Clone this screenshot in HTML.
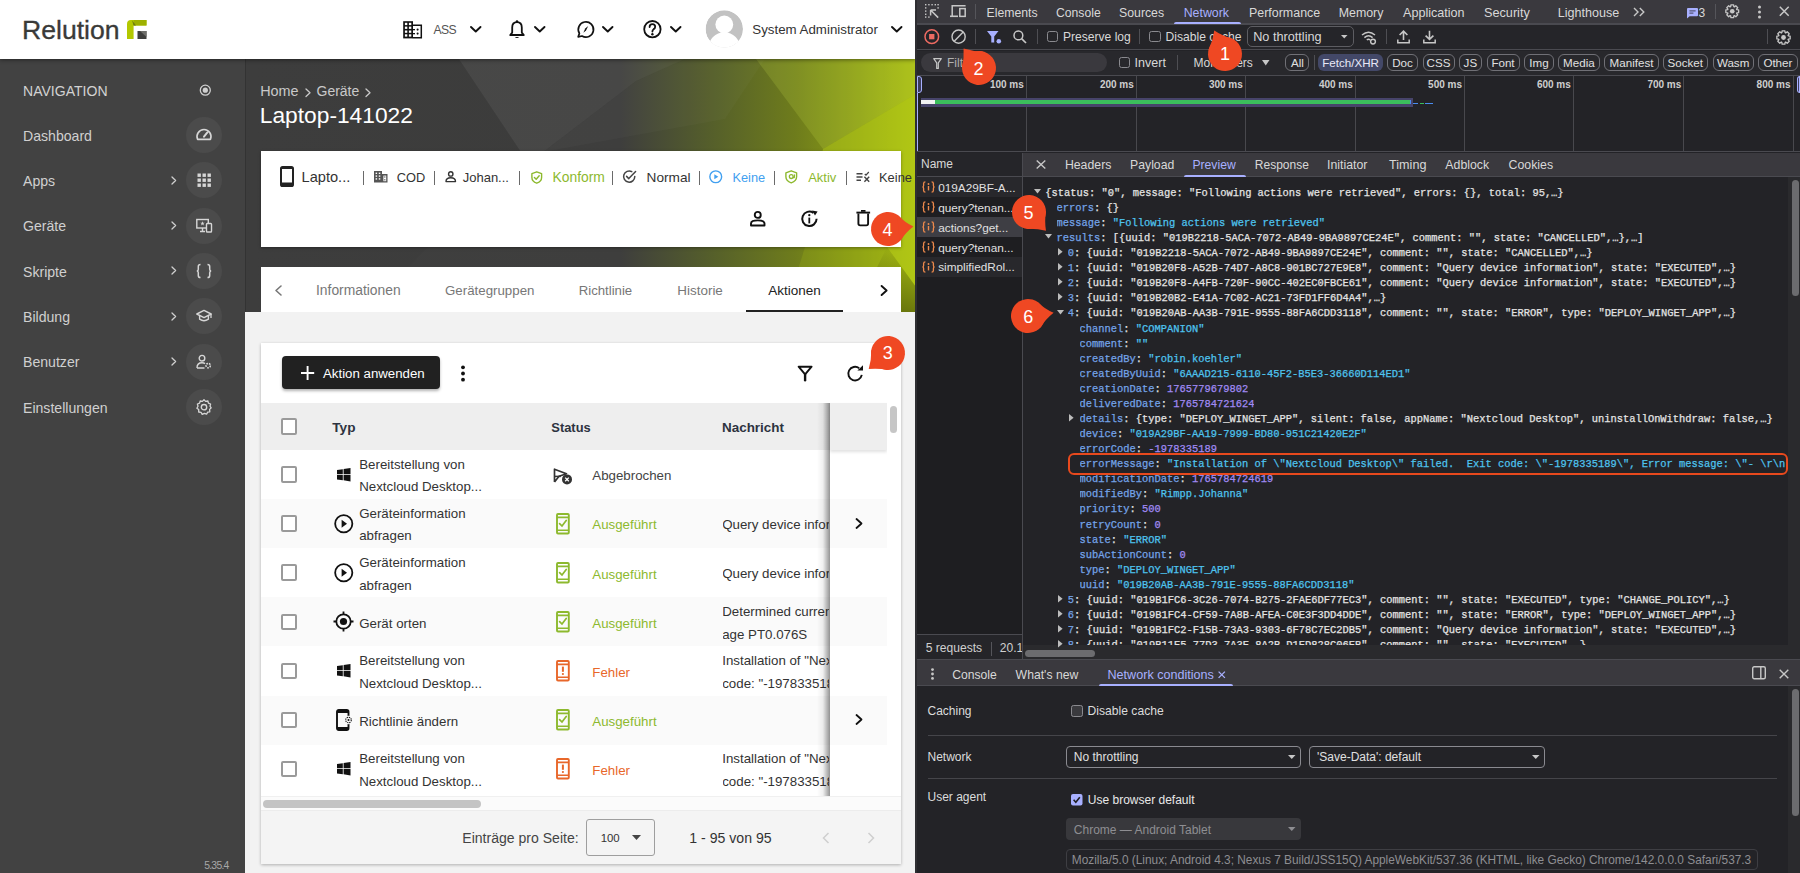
<!DOCTYPE html>
<html><head><meta charset="utf-8"><style>
html,body{margin:0;padding:0;width:1800px;height:873px;overflow:hidden;background:#f2f2f2;}
.t{position:absolute;white-space:pre;line-height:1;}
.r{position:absolute;}
svg.r{overflow:visible;}
</style></head><body>
<div class="r" style="left:245.00px;top:312.00px;width:671.00px;height:561.00px;background:#f2f2f2"></div>
<svg class="r" style="left:245.00px;top:59.00px;" width="671" height="253" viewBox="0 0 671 253">
<defs>
<linearGradient id="hg" x1="0" y1="0" x2="1" y2="0">
<stop offset="0" stop-color="#3f3f3f"/>
<stop offset="0.56" stop-color="#3e3e3d"/>
<stop offset="0.70" stop-color="#56602a"/>
<stop offset="0.82" stop-color="#6e7c1c"/>
<stop offset="0.92" stop-color="#8c9e16"/>
<stop offset="1" stop-color="#a6ba12"/>
</linearGradient>
<linearGradient id="vd" x1="0" y1="0" x2="0" y2="1">
<stop offset="0" stop-color="#000" stop-opacity="0"/>
<stop offset="1" stop-color="#000" stop-opacity="0.35"/>
</linearGradient>
</defs>
<rect x="0" y="0" width="671" height="253" fill="url(#hg)"/>
<polygon points="214,0 440,0 391,22 298,93 276,93" fill="#ffffff" opacity="0.05"/><polygon points="391,22 440,0 520,0 480,60 298,93" fill="#ffffff" opacity="0.025"/>
<polygon points="0,0 214,0 276,93 120,253 0,253" fill="#000000" opacity="0.02"/>
<polygon points="511,0 671,0 671,35 578,90" fill="#d8f050" opacity="0.16"/>
<polygon points="578,90 671,35 671,228 642,188 560,188" fill="#c0d818" opacity="0.42"/><polygon points="560,188 642,188 671,228 671,253 540,253" fill="#a8c010" opacity="0.22"/><polygon points="642,188 671,228 671,253 610,253" fill="url(#vd)"/>

</svg>
<div class="r" style="left:0.00px;top:59.00px;width:245.00px;height:814.00px;background:#424242"></div>
<div class="r" style="left:244.50px;top:59.00px;width:1.00px;height:253.00px;background:#333333"></div>
<div class="r" style="left:0.00px;top:0.00px;width:916.00px;height:59.00px;background:#ffffff;box-shadow:0 1px 4px rgba(0,0,0,0.45);z-index:5"></div>
<div class="t" style="left:22.00px;top:16.80px;font-size:26.6px;color:#3a3a38;font-weight:400;font-family:'Liberation Sans', sans-serif;z-index:6;-webkit-text-stroke:0.35px #3a3a38">Relution</div>
<svg class="r" style="left:127.00px;top:20.00px;z-index:6" width="20" height="19" viewBox="0 0 20 19"><path d="M0,4 Q0,0 4,0 L19.5,0 L19.5,5.5 L6.6,5.5 L6.6,19 L0,19 Z" fill="#b3c800"/>
<path d="M6.6,0 L19.5,0 L19.5,5.5 L6.6,5.5 Z" fill="#9db000"/>
<path d="M5,0.2 L9,5.5 L6.6,5.5 Z" fill="#6d7a10"/>
<rect x="10.5" y="11" width="9" height="8" fill="#3e3e3c"/>
<path d="M13,11 L19.5,11 L19.5,17 Z" fill="#6e6e6a"/></svg>
<svg class="r" style="left:403.00px;top:20.50px;z-index:6" width="20" height="18" viewBox="0 0 20 18"><rect x="0.2" y="0.2" width="9.8" height="17.2" fill="#111"/>
<g fill="#fff"><rect x="1.9" y="1.8" width="2.4" height="2.3"/><rect x="5.9" y="1.8" width="2.4" height="2.3"/><rect x="1.9" y="5.6" width="2.4" height="2.3"/><rect x="5.9" y="5.6" width="2.4" height="2.3"/>
<rect x="1.9" y="9.5" width="2.4" height="2.3"/><rect x="5.9" y="9.5" width="2.4" height="2.3"/><rect x="1.9" y="13.3" width="2.4" height="2.3"/><rect x="5.9" y="13.3" width="2.4" height="2.3"/></g>
<path d="M9.8,4.35 L18.3,4.35 L18.3,16.7 L9.8,16.7" fill="none" stroke="#111" stroke-width="1.5"/>
<g fill="#111"><circle cx="14.6" cy="8.6" r="1.05"/><circle cx="14.6" cy="12.6" r="1.05"/><rect x="9.8" y="8" width="2.2" height="1.3"/><rect x="9.8" y="12" width="2.2" height="1.3"/></g></svg>
<div class="t" style="left:433.50px;top:23.90px;font-size:12.2px;color:#555;font-weight:400;font-family:'Liberation Sans', sans-serif;z-index:6;letter-spacing:-0.6px">ASS</div>
<svg class="r" style="left:469.50px;top:26.30px;z-index:6" width="11.5" height="6.5" viewBox="0 0 11.5 6.5"><path d="M1,1 L5.75,5.5 L10.5,1" fill="none" stroke="#111" stroke-width="1.9" stroke-linecap="round" stroke-linejoin="round"/></svg>
<svg class="r" style="left:509.00px;top:20.00px;z-index:6" width="16" height="19" viewBox="0 0 16 19"><path d="M8,2.2 C4.6,2.2 3.2,4.8 3.2,7.6 L3.2,12.6 L1.2,15 L14.8,15 L12.8,12.6 L12.8,7.6 C12.8,4.8 11.4,2.2 8,2.2 Z" fill="none" stroke="#111" stroke-width="1.8" stroke-linejoin="round"/>
<circle cx="8" cy="1.6" r="1.3" fill="#111"/><path d="M5.8,17 Q8,19 10.2,17 Z" fill="#111"/></svg>
<svg class="r" style="left:534.00px;top:26.30px;z-index:6" width="11.5" height="6.5" viewBox="0 0 11.5 6.5"><path d="M1,1 L5.75,5.5 L10.5,1" fill="none" stroke="#111" stroke-width="1.9" stroke-linecap="round" stroke-linejoin="round"/></svg>
<svg class="r" style="left:575.50px;top:20.50px;z-index:6" width="18" height="17.5" viewBox="0 0 18 17.5"><path d="M2.2,15.8 L3.4,12.4 A7.6,7.6 0 1 1 6,15 Z" fill="none" stroke="#111" stroke-width="1.7" stroke-linejoin="round"/>
<path d="M12.2,5 L10,9.6 L7.4,11.8 L9.2,7.6 Z" fill="#111"/></svg>
<svg class="r" style="left:601.50px;top:26.30px;z-index:6" width="11.5" height="6.5" viewBox="0 0 11.5 6.5"><path d="M1,1 L5.75,5.5 L10.5,1" fill="none" stroke="#111" stroke-width="1.9" stroke-linecap="round" stroke-linejoin="round"/></svg>
<svg class="r" style="left:643.00px;top:20.00px;z-index:6" width="19" height="18.5" viewBox="0 0 19 18.5"><circle cx="9.4" cy="9.2" r="8.2" fill="none" stroke="#111" stroke-width="1.8"/>
<path d="M6.6,7 Q6.6,4.2 9.4,4.2 Q12.2,4.2 12.2,6.8 Q12.2,8.4 10.4,9.4 Q9.4,10 9.4,11.6" fill="none" stroke="#111" stroke-width="1.8" stroke-linecap="round"/>
<circle cx="9.4" cy="14.2" r="1.2" fill="#111"/></svg>
<svg class="r" style="left:669.50px;top:26.30px;z-index:6" width="11.5" height="6.5" viewBox="0 0 11.5 6.5"><path d="M1,1 L5.75,5.5 L10.5,1" fill="none" stroke="#111" stroke-width="1.9" stroke-linecap="round" stroke-linejoin="round"/></svg>
<svg class="r" style="left:705.00px;top:10.00px;z-index:6" width="40" height="40" viewBox="0 0 40 40"><defs><clipPath id="avc"><circle cx="19.3" cy="19" r="18.7"/></clipPath></defs><g clip-path="url(#avc)"><circle cx="19.3" cy="19" r="18.7" fill="#c2c2c2"/>
<circle cx="19.3" cy="14.5" r="8.9" fill="#fff"/>
<circle cx="19.3" cy="38.2" r="16" fill="#fff"/></g></svg>
<div class="t" style="left:752.30px;top:23.30px;font-size:13.3px;color:#333;font-weight:400;font-family:'Liberation Sans', sans-serif;z-index:6">System Administrator</div>
<svg class="r" style="left:891.00px;top:26.30px;z-index:6" width="11.5" height="6.5" viewBox="0 0 11.5 6.5"><path d="M1,1 L5.75,5.5 L10.5,1" fill="none" stroke="#111" stroke-width="1.9" stroke-linecap="round" stroke-linejoin="round"/></svg>
<div class="t" style="left:23.00px;top:83.60px;font-size:14.05px;color:#d2d2d2;font-weight:400;font-family:'Liberation Sans', sans-serif;">NAVIGATION</div>
<svg class="r" style="left:198.50px;top:83.50px;" width="13" height="13" viewBox="0 0 13 13"><circle cx="6.3" cy="6.2" r="5" fill="none" stroke="#cfcfcf" stroke-width="1.3"/><circle cx="6.3" cy="6.2" r="2.6" fill="#cfcfcf"/></svg>
<div class="t" style="left:23.00px;top:128.70px;font-size:14.1px;color:#d0d0d0;font-weight:400;font-family:'Liberation Sans', sans-serif;">Dashboard</div>
<svg class="r" style="left:186.00px;top:116.90px;" width="36" height="36" viewBox="0 0 36 36"><circle cx="18" cy="18" r="18" fill="#4b4b4b"/></svg>
<svg class="r" style="left:196.00px;top:126.90px;" width="16" height="16" viewBox="0 0 16 16"><path d="M1.6,12.4 A7,7 0 1 1 14.4,12.4 Z" fill="none" stroke="#d6d6d6" stroke-width="1.6" stroke-linejoin="round"/><path d="M8,9.6 L11.4,5.4" stroke="#d6d6d6" stroke-width="2" stroke-linecap="round"/></svg>
<div class="t" style="left:23.00px;top:174.02px;font-size:14.1px;color:#d0d0d0;font-weight:400;font-family:'Liberation Sans', sans-serif;">Apps</div>
<svg class="r" style="left:186.00px;top:162.22px;" width="36" height="36" viewBox="0 0 36 36"><circle cx="18" cy="18" r="18" fill="#4b4b4b"/></svg>
<svg class="r" style="left:196.00px;top:172.22px;" width="16" height="16" viewBox="0 0 16 16"><rect x="1.5" y="1.5" width="3.4" height="3.4" fill="#d6d6d6"/><rect x="1.5" y="6.5" width="3.4" height="3.4" fill="#d6d6d6"/><rect x="1.5" y="11.5" width="3.4" height="3.4" fill="#d6d6d6"/><rect x="6.5" y="1.5" width="3.4" height="3.4" fill="#d6d6d6"/><rect x="6.5" y="6.5" width="3.4" height="3.4" fill="#d6d6d6"/><rect x="6.5" y="11.5" width="3.4" height="3.4" fill="#d6d6d6"/><rect x="11.5" y="1.5" width="3.4" height="3.4" fill="#d6d6d6"/><rect x="11.5" y="6.5" width="3.4" height="3.4" fill="#d6d6d6"/><rect x="11.5" y="11.5" width="3.4" height="3.4" fill="#d6d6d6"/></svg>
<svg class="r" style="left:170.50px;top:175.72px;" width="6" height="9" viewBox="0 0 6 9"><path d="M1,1 L4.6,4.5 L1,8" fill="none" stroke="#cfcfcf" stroke-width="1.3" stroke-linecap="round" stroke-linejoin="round"/></svg>
<div class="t" style="left:23.00px;top:219.34px;font-size:14.1px;color:#d0d0d0;font-weight:400;font-family:'Liberation Sans', sans-serif;">Geräte</div>
<svg class="r" style="left:186.00px;top:207.54px;" width="36" height="36" viewBox="0 0 36 36"><circle cx="18" cy="18" r="18" fill="#4b4b4b"/></svg>
<svg class="r" style="left:196.00px;top:217.54px;" width="16" height="16" viewBox="0 0 16 16"><rect x="0.8" y="1.5" width="11.5" height="8.5" fill="none" stroke="#d6d6d6" stroke-width="1.4"/><path d="M4,13.5 L9,13.5 M6.5,10 L6.5,13.5" stroke="#d6d6d6" stroke-width="1.4"/><rect x="10.5" y="5.5" width="5" height="8.5" rx="0.8" fill="#424242" stroke="#d6d6d6" stroke-width="1.4"/><path d="M6.5,3.2 L7.1,4.8 L8.7,4.8 L7.4,5.8 L7.9,7.4 L6.5,6.4 L5.1,7.4 L5.6,5.8 L4.3,4.8 L5.9,4.8 Z" fill="#d6d6d6"/></svg>
<svg class="r" style="left:170.50px;top:221.04px;" width="6" height="9" viewBox="0 0 6 9"><path d="M1,1 L4.6,4.5 L1,8" fill="none" stroke="#cfcfcf" stroke-width="1.3" stroke-linecap="round" stroke-linejoin="round"/></svg>
<div class="t" style="left:23.00px;top:264.66px;font-size:14.1px;color:#d0d0d0;font-weight:400;font-family:'Liberation Sans', sans-serif;">Skripte</div>
<svg class="r" style="left:186.00px;top:252.86px;" width="36" height="36" viewBox="0 0 36 36"><circle cx="18" cy="18" r="18" fill="#4b4b4b"/></svg>
<svg class="r" style="left:196.00px;top:262.86px;" width="16" height="16" viewBox="0 0 16 16"><path d="M4.5,1.5 Q2.3,1.5 2.3,3.6 L2.3,6.2 Q2.3,8 0.8,8 Q2.3,8 2.3,9.8 L2.3,12.4 Q2.3,14.5 4.5,14.5 M11.5,1.5 Q13.7,1.5 13.7,3.6 L13.7,6.2 Q13.7,8 15.2,8 Q13.7,8 13.7,9.8 L13.7,12.4 Q13.7,14.5 11.5,14.5" fill="none" stroke="#d6d6d6" stroke-width="1.5"/></svg>
<svg class="r" style="left:170.50px;top:266.36px;" width="6" height="9" viewBox="0 0 6 9"><path d="M1,1 L4.6,4.5 L1,8" fill="none" stroke="#cfcfcf" stroke-width="1.3" stroke-linecap="round" stroke-linejoin="round"/></svg>
<div class="t" style="left:23.00px;top:309.98px;font-size:14.1px;color:#d0d0d0;font-weight:400;font-family:'Liberation Sans', sans-serif;">Bildung</div>
<svg class="r" style="left:186.00px;top:298.18px;" width="36" height="36" viewBox="0 0 36 36"><circle cx="18" cy="18" r="18" fill="#4b4b4b"/></svg>
<svg class="r" style="left:196.00px;top:308.18px;" width="16" height="16" viewBox="0 0 16 16"><path d="M0.8,6 L8,2.4 L15.2,6 L8,9.6 Z" fill="none" stroke="#d6d6d6" stroke-width="1.4" stroke-linejoin="round"/><path d="M3.6,7.6 L3.6,11.2 Q8,14.2 12.4,11.2 L12.4,7.6" fill="none" stroke="#d6d6d6" stroke-width="1.4"/><path d="M15,6 L15,10" stroke="#d6d6d6" stroke-width="1.3"/></svg>
<svg class="r" style="left:170.50px;top:311.68px;" width="6" height="9" viewBox="0 0 6 9"><path d="M1,1 L4.6,4.5 L1,8" fill="none" stroke="#cfcfcf" stroke-width="1.3" stroke-linecap="round" stroke-linejoin="round"/></svg>
<div class="t" style="left:23.00px;top:355.30px;font-size:14.1px;color:#d0d0d0;font-weight:400;font-family:'Liberation Sans', sans-serif;">Benutzer</div>
<svg class="r" style="left:186.00px;top:343.50px;" width="36" height="36" viewBox="0 0 36 36"><circle cx="18" cy="18" r="18" fill="#4b4b4b"/></svg>
<svg class="r" style="left:196.00px;top:353.50px;" width="16" height="16" viewBox="0 0 16 16"><circle cx="6" cy="4.2" r="2.8" fill="none" stroke="#d6d6d6" stroke-width="1.4"/><path d="M1,14 Q1,8.8 6,8.8 Q8,8.8 9,9.6 M1,14 L8.5,14" fill="none" stroke="#d6d6d6" stroke-width="1.4"/><circle cx="12.2" cy="11.6" r="2.2" fill="none" stroke="#d6d6d6" stroke-width="1.5" stroke-dasharray="1.6 0.9"/></svg>
<svg class="r" style="left:170.50px;top:357.00px;" width="6" height="9" viewBox="0 0 6 9"><path d="M1,1 L4.6,4.5 L1,8" fill="none" stroke="#cfcfcf" stroke-width="1.3" stroke-linecap="round" stroke-linejoin="round"/></svg>
<div class="t" style="left:23.00px;top:400.62px;font-size:14.1px;color:#d0d0d0;font-weight:400;font-family:'Liberation Sans', sans-serif;">Einstellungen</div>
<svg class="r" style="left:186.00px;top:388.82px;" width="36" height="36" viewBox="0 0 36 36"><circle cx="18" cy="18" r="18" fill="#4b4b4b"/></svg>
<svg class="r" style="left:196.00px;top:398.82px;" width="16" height="16" viewBox="0 0 16 16"><path d="M8,0.8 L9.6,2.4 L11.9,2 L12.4,4.2 L14.6,5 L14,7.2 L15.2,8.8 L13.6,10.4 L13.8,12.8 L11.6,13.2 L10.6,15.2 L8.4,14.4 L6.2,15.4 L5,13.3 L2.7,13 L2.7,10.6 L0.9,9.2 L2,7.2 L1.4,5 L3.6,4.2 L4.2,2 L6.4,2.4 Z" fill="none" stroke="#d6d6d6" stroke-width="1.3" stroke-linejoin="round"/><circle cx="8" cy="8.2" r="2.7" fill="none" stroke="#d6d6d6" stroke-width="1.4"/></svg>
<div class="t" style="left:204.20px;top:860.90px;font-size:10.4px;color:#a8a8a8;font-weight:400;font-family:'Liberation Sans', sans-serif;letter-spacing:-0.75px">5.35.4</div>
<div class="t" style="left:260.20px;top:84.40px;font-size:14.4px;color:#c9c9c9;font-weight:400;font-family:'Liberation Sans', sans-serif;">Home</div>
<svg class="r" style="left:304.50px;top:88.00px;" width="7" height="9.5" viewBox="0 0 7 9.5"><path d="M1,1 L5,4.75 L1,8.5" fill="none" stroke="#c9c9c9" stroke-width="1.3" stroke-linecap="round" stroke-linejoin="round"/></svg>
<div class="t" style="left:316.50px;top:84.40px;font-size:14.0px;color:#c9c9c9;font-weight:400;font-family:'Liberation Sans', sans-serif;">Geräte</div>
<svg class="r" style="left:364.50px;top:88.00px;" width="7" height="9.5" viewBox="0 0 7 9.5"><path d="M1,1 L5,4.75 L1,8.5" fill="none" stroke="#c9c9c9" stroke-width="1.3" stroke-linecap="round" stroke-linejoin="round"/></svg>
<div class="t" style="left:259.80px;top:104.20px;font-size:22.75px;color:#ffffff;font-weight:400;font-family:'Liberation Sans', sans-serif;">Laptop-141022</div>
<div class="r" style="left:260.50px;top:150.50px;width:640.00px;height:96.80px;background:#fff;box-shadow:0 1px 3px rgba(0,0,0,0.35)"></div>
<svg class="r" style="left:280.00px;top:166.00px;" width="14" height="21" viewBox="0 0 14 21"><rect x="1" y="1" width="12" height="19" rx="1.6" fill="none" stroke="#222" stroke-width="2"/><rect x="1" y="16.5" width="12" height="3.5" fill="#222"/><rect x="1" y="1" width="12" height="2" fill="#222"/></svg>
<div class="t" style="left:301.60px;top:170.20px;font-size:14.6px;color:#333;font-weight:400;font-family:'Liberation Sans', sans-serif;">Lapto...</div>
<div class="r" style="left:363.00px;top:170.50px;width:1.20px;height:14.00px;background:#6a6a6a"></div>
<svg class="r" style="left:374.00px;top:170.80px;" width="13.5" height="11.5" viewBox="0 0 13.5 11.5"><rect x="0" y="0" width="8" height="11.5" fill="#555"/><rect x="8" y="3" width="5.5" height="8.5" fill="#555"/>
<g fill="#fff"><rect x="1.6" y="1.6" width="1.5" height="1.4"/><rect x="4.8" y="1.6" width="1.5" height="1.4"/><rect x="1.6" y="4.4" width="1.5" height="1.4"/><rect x="4.8" y="4.4" width="1.5" height="1.4"/><rect x="1.6" y="7.2" width="1.5" height="1.4"/><rect x="4.8" y="7.2" width="1.5" height="1.4"/><rect x="9.4" y="4.6" width="2.8" height="5.6"/></g>
<g fill="#555"><rect x="10.2" y="5.4" width="1.2" height="1.2"/><rect x="10.2" y="8.2" width="1.2" height="1.2"/></g></svg>
<div class="t" style="left:396.80px;top:172.20px;font-size:12.8px;color:#333;font-weight:400;font-family:'Liberation Sans', sans-serif;">COD</div>
<div class="r" style="left:434.00px;top:170.50px;width:1.20px;height:14.00px;background:#6a6a6a"></div>
<svg class="r" style="left:445.00px;top:171.00px;" width="11.5" height="11.5" viewBox="0 0 11.5 11.5"><circle cx="5.75" cy="2.9" r="2.2" fill="none" stroke="#333" stroke-width="1.4"/><path d="M1,10.6 Q1,6.8 5.75,6.8 Q10.5,6.8 10.5,10.6 Z" fill="none" stroke="#333" stroke-width="1.4" stroke-linejoin="round"/></svg>
<div class="t" style="left:462.70px;top:171.20px;font-size:13px;color:#333;font-weight:400;font-family:'Liberation Sans', sans-serif;">Johan...</div>
<div class="r" style="left:519.00px;top:170.50px;width:1.20px;height:14.00px;background:#6a6a6a"></div>
<svg class="r" style="left:530.50px;top:170.50px;" width="11.5" height="13" viewBox="0 0 11.5 13"><path d="M5.75,0.8 L10.6,2.6 L10.6,6.4 Q10.6,10.4 5.75,12.2 Q0.9,10.4 0.9,6.4 L0.9,2.6 Z" fill="none" stroke="#8db92e" stroke-width="1.4" stroke-linejoin="round"/><path d="M3.4,6.4 L5.2,8.2 L8.2,4.8" fill="none" stroke="#8db92e" stroke-width="1.4" stroke-linecap="round" stroke-linejoin="round"/></svg>
<div class="t" style="left:552.50px;top:171.20px;font-size:13.85px;color:#8db92e;font-weight:400;font-family:'Liberation Sans', sans-serif;">Konform</div>
<div class="r" style="left:612.00px;top:170.50px;width:1.20px;height:14.00px;background:#6a6a6a"></div>
<svg class="r" style="left:623.00px;top:170.30px;" width="14" height="13" viewBox="0 0 14 13"><path d="M11.8,6.6 A5.6,5.6 0 1 1 8.8,1.6" fill="none" stroke="#444" stroke-width="1.5" stroke-linecap="round"/><path d="M3.6,6.4 L5.8,8.6 L12.6,1.6" fill="none" stroke="#444" stroke-width="1.5" stroke-linecap="round" stroke-linejoin="round"/></svg>
<div class="t" style="left:646.60px;top:171.20px;font-size:13.65px;color:#333;font-weight:400;font-family:'Liberation Sans', sans-serif;">Normal</div>
<div class="r" style="left:699.00px;top:170.50px;width:1.20px;height:14.00px;background:#6a6a6a"></div>
<svg class="r" style="left:709.00px;top:170.00px;" width="13.5" height="13.5" viewBox="0 0 13.5 13.5"><circle cx="6.75" cy="6.75" r="5.9" fill="none" stroke="#42a0f0" stroke-width="1.4"/><path d="M5.3,4.2 L9.3,6.75 L5.3,9.3 Z" fill="#42a0f0"/></svg>
<div class="t" style="left:732.40px;top:172.20px;font-size:12.8px;color:#42a0f0;font-weight:400;font-family:'Liberation Sans', sans-serif;">Keine</div>
<div class="r" style="left:774.00px;top:170.50px;width:1.20px;height:14.00px;background:#6a6a6a"></div>
<svg class="r" style="left:784.50px;top:170.00px;" width="12.5" height="13.5" viewBox="0 0 12.5 13.5"><path d="M6.25,0.8 L11.6,2.8 L11.6,6.8 Q11.6,11 6.25,12.8 Q0.9,11 0.9,6.8 L0.9,2.8 Z" fill="none" stroke="#8db92e" stroke-width="1.4" stroke-linejoin="round"/><circle cx="6.25" cy="6.6" r="1.9" fill="none" stroke="#8db92e" stroke-width="1.3"/><path d="M8.2,6.6 Q8.6,8.6 9.4,7.4 Q10,5.6 9,4.4" fill="none" stroke="#8db92e" stroke-width="1.1"/></svg>
<div class="t" style="left:808.20px;top:171.20px;font-size:13px;color:#8db92e;font-weight:400;font-family:'Liberation Sans', sans-serif;">Aktiv</div>
<div class="r" style="left:846.00px;top:170.50px;width:1.20px;height:14.00px;background:#6a6a6a"></div>
<svg class="r" style="left:855.50px;top:171.00px;" width="14" height="12" viewBox="0 0 14 12"><path d="M0.5,2.8 L6.5,2.8 M0.5,6 L6.5,6 M0.5,9.2 L5,9.2" stroke="#444" stroke-width="1.4"/><path d="M8.4,5.8 L13.2,10.8 M13.2,5.8 L8.4,10.8" stroke="#444" stroke-width="1.4"/><path d="M8.8,3 L10,4.2 L12.8,1" fill="none" stroke="#444" stroke-width="1.2"/></svg>
<div class="t" style="left:879.00px;top:172.20px;font-size:12.9px;color:#333;font-weight:400;font-family:'Liberation Sans', sans-serif;z-index:2">Keine</div>
<svg class="r" style="left:749.50px;top:210.50px;" width="15.5" height="15.5" viewBox="0 0 15.5 15.5"><circle cx="7.75" cy="3.9" r="3" fill="none" stroke="#111" stroke-width="1.9"/><path d="M1,14.5 L1,12.6 Q1,9.4 7.75,9.4 Q14.5,9.4 14.5,12.6 L14.5,14.5 Z" fill="none" stroke="#111" stroke-width="1.9" stroke-linejoin="round"/></svg>
<svg class="r" style="left:801.00px;top:209.50px;" width="18" height="17.5" viewBox="0 0 18 17.5"><path d="M15.6,8.8 A7.2,7.2 0 1 1 12.4,2.8" fill="none" stroke="#111" stroke-width="2"/><path d="M11,0.4 L16.6,1.4 L14,5.6 Z" fill="#111"/><circle cx="8.3" cy="5.2" r="1.15" fill="#111"/><path d="M8.3,7.6 L8.3,13.4" stroke="#111" stroke-width="1.8"/></svg>
<svg class="r" style="left:855.50px;top:210.00px;" width="14.5" height="16.5" viewBox="0 0 14.5 16.5"><path d="M0.4,2.6 L14.1,2.6" stroke="#111" stroke-width="1.9"/><path d="M5,0.9 L9.5,0.9" stroke="#111" stroke-width="1.8"/><path d="M2.4,3.6 L2.4,13.6 Q2.4,15.4 4.2,15.4 L10.3,15.4 Q12.1,15.4 12.1,13.6 L12.1,3.6" fill="none" stroke="#111" stroke-width="1.9"/></svg>
<div class="r" style="left:260.50px;top:267.00px;width:640.00px;height:45.00px;background:#fff"></div>
<svg class="r" style="left:273.50px;top:284.50px;" width="9" height="11" viewBox="0 0 9 11"><path d="M7,1 L2,5.5 L7,10" fill="none" stroke="#777" stroke-width="1.6" stroke-linecap="round" stroke-linejoin="round"/></svg>
<div class="t" style="left:316.00px;top:284.30px;font-size:13.85px;color:#777;font-weight:400;font-family:'Liberation Sans', sans-serif;">Informationen</div>
<div class="t" style="left:445.00px;top:284.30px;font-size:13.3px;color:#777;font-weight:400;font-family:'Liberation Sans', sans-serif;">Gerätegruppen</div>
<div class="t" style="left:578.70px;top:284.30px;font-size:13.2px;color:#777;font-weight:400;font-family:'Liberation Sans', sans-serif;">Richtlinie</div>
<div class="t" style="left:677.30px;top:284.30px;font-size:13.45px;color:#777;font-weight:400;font-family:'Liberation Sans', sans-serif;">Historie</div>
<div class="t" style="left:768.20px;top:284.30px;font-size:13.5px;color:#222;font-weight:400;font-family:'Liberation Sans', sans-serif;">Aktionen</div>
<div class="r" style="left:745.50px;top:310.20px;width:97.00px;height:2.00px;background:#222"></div>
<svg class="r" style="left:879.50px;top:284.50px;" width="9" height="11" viewBox="0 0 9 11"><path d="M1.6,1 L6.6,5.5 L1.6,10" fill="none" stroke="#111" stroke-width="1.9" stroke-linecap="round" stroke-linejoin="round"/></svg>
<div class="r" style="left:260.50px;top:343.00px;width:640.00px;height:520.50px;background:#fff;box-shadow:0 1px 3px rgba(0,0,0,0.28)"></div>
<div class="r" style="left:281.50px;top:356.00px;width:158.30px;height:33.40px;background:#212121;border-radius:4px;box-shadow:0 2px 3px rgba(0,0,0,0.3)"></div>
<svg class="r" style="left:300.80px;top:366.20px;" width="13.2" height="13.9" viewBox="0 0 13.2 13.9"><path d="M6.6,0 L6.6,13.9 M0,6.95 L13.2,6.95" stroke="#fff" stroke-width="1.9"/></svg>
<div class="t" style="left:323.00px;top:367.10px;font-size:13.25px;color:#fff;font-weight:400;font-family:'Liberation Sans', sans-serif;">Aktion anwenden</div>
<svg class="r" style="left:459.50px;top:364.50px;" width="6" height="17" viewBox="0 0 6 17"><circle cx="3" cy="2.3" r="1.9" fill="#111"/><circle cx="3" cy="8.5" r="1.9" fill="#111"/><circle cx="3" cy="14.7" r="1.9" fill="#111"/></svg>
<svg class="r" style="left:796.00px;top:364.50px;" width="18" height="17" viewBox="0 0 18 17"><path d="M2.6,1.7 L15.6,1.7 L9.1,9.4 Z" fill="none" stroke="#111" stroke-width="1.9" stroke-linejoin="round"/><path d="M9.1,9.4 L9.1,15.2" stroke="#111" stroke-width="2.4" stroke-linecap="round"/></svg>
<svg class="r" style="left:846.00px;top:364.00px;" width="18" height="17" viewBox="0 0 18 17"><path d="M15.79,10.9 A6.8,6.8 0 1 1 13.2,4.2" fill="none" stroke="#111" stroke-width="1.9"/><path d="M11.4,6.6 L17,6.6 L17,1.2 Z" fill="#111"/></svg>
<div class="r" style="left:260.50px;top:403.00px;width:626.00px;height:47.00px;background:#eeeeee"></div>
<div class="r" style="left:280.50px;top:418.40px;width:16.60px;height:16.60px;box-sizing:border-box;border:2px solid #9a9a9a;border-radius:2px;background:#fff"></div>
<div class="t" style="left:332.30px;top:421.40px;font-size:13.6px;color:#2d3340;font-weight:700;font-family:'Liberation Sans', sans-serif;">Typ</div>
<div class="t" style="left:551.30px;top:422.40px;font-size:12.9px;color:#2d3340;font-weight:700;font-family:'Liberation Sans', sans-serif;">Status</div>
<div class="t" style="left:722.00px;top:421.40px;font-size:13.45px;color:#2d3340;font-weight:700;font-family:'Liberation Sans', sans-serif;">Nachricht</div>
<div class="r" style="left:260.50px;top:450.00px;width:626.00px;height:49.10px;background:#ffffff"></div>
<div class="r" style="left:280.50px;top:466.20px;width:16.60px;height:16.60px;box-sizing:border-box;border:2px solid #9a9a9a;border-radius:2px;background:#fff"></div>
<svg class="r" style="left:336.60px;top:467.80px;" width="13.5" height="13.5" viewBox="0 0 13.5 13.5"><path d="M0,2 L5.8,1.2 L5.8,6.3 L0,6.3 Z M6.6,1.1 L13.5,0 L13.5,6.3 L6.6,6.3 Z M0,7.1 L5.8,7.1 L5.8,12.2 L0,11.4 Z M6.6,7.1 L13.5,7.1 L13.5,13.4 L6.6,12.3 Z" fill="#111"/></svg>
<div class="t" style="left:359.20px;top:457.60px;font-size:13.3px;color:#333;font-weight:400;font-family:'Liberation Sans', sans-serif;">Bereitstellung von</div>
<div class="t" style="left:359.20px;top:480.30px;font-size:13.3px;color:#333;font-weight:400;font-family:'Liberation Sans', sans-serif;">Nextcloud Desktop...</div>
<svg class="r" style="left:553.00px;top:467.50px;" width="20" height="16.5" viewBox="0 0 20 16.5"><path d="M1.5,14 L1.5,1.2 L13.5,5.8 L6,8.2 L1.5,14" fill="none" stroke="#333" stroke-width="1.7" stroke-linejoin="round"/><path d="M1.5,8.4 L7.8,8.4" stroke="#333" stroke-width="1.5"/><circle cx="14" cy="11.4" r="5" fill="#333"/><path d="M12.2,9.6 L15.8,13.2 M15.8,9.6 L12.2,13.2" stroke="#fff" stroke-width="1.3"/></svg>
<div class="t" style="left:592.30px;top:469.30px;font-size:13.3px;color:#444;font-weight:400;font-family:'Liberation Sans', sans-serif;">Abgebrochen</div>
<div class="r" style="left:723px;top:450.00px;width:106px;height:49.1px;overflow:hidden">
<div class="t" style="left:-0.80px;top:7.60px;font-size:13.3px;color:#333;font-weight:400;font-family:'Liberation Sans', sans-serif;"></div>
<div class="t" style="left:-0.80px;top:30.30px;font-size:13.3px;color:#333;font-weight:400;font-family:'Liberation Sans', sans-serif;"></div>
</div>
<div class="r" style="left:260.50px;top:499.10px;width:626.00px;height:49.10px;background:#fafafa"></div>
<div class="r" style="left:280.50px;top:515.30px;width:16.60px;height:16.60px;box-sizing:border-box;border:2px solid #9a9a9a;border-radius:2px;background:#fff"></div>
<svg class="r" style="left:333.80px;top:513.80px;" width="19.5" height="19.5" viewBox="0 0 19.5 19.5"><circle cx="9.75" cy="9.75" r="8.6" fill="none" stroke="#111" stroke-width="1.8"/><path d="M7.6,5.8 L13,9.75 L7.6,13.7 Z" fill="#111"/></svg>
<div class="t" style="left:359.20px;top:506.70px;font-size:13.3px;color:#333;font-weight:400;font-family:'Liberation Sans', sans-serif;">Geräteinformation</div>
<div class="t" style="left:359.20px;top:529.40px;font-size:13.3px;color:#333;font-weight:400;font-family:'Liberation Sans', sans-serif;">abfragen</div>
<svg class="r" style="left:555.80px;top:512.60px;" width="13.8" height="21.5" viewBox="0 0 13.8 21.5"><rect x="1" y="1" width="11.8" height="19.5" rx="1" fill="none" stroke="#8db92e" stroke-width="1.9"/><path d="M1,4.4 L12.8,4.4 M1,17.2 L12.8,17.2" stroke="#8db92e" stroke-width="1.6"/><path d="M3.6,10.6 L6,13 L10.2,7.4" fill="none" stroke="#8db92e" stroke-width="1.7" stroke-linecap="round"/></svg>
<div class="t" style="left:592.30px;top:518.40px;font-size:13.3px;color:#8db92e;font-weight:400;font-family:'Liberation Sans', sans-serif;">Ausgeführt</div>
<div class="r" style="left:723px;top:499.10px;width:106px;height:49.1px;overflow:hidden">
<div class="t" style="left:-0.80px;top:19.30px;font-size:13.3px;color:#333;font-weight:400;font-family:'Liberation Sans', sans-serif;">Query device infor</div>
</div>
<svg class="r" style="left:854.50px;top:517.60px;" width="8" height="11" viewBox="0 0 8 11"><path d="M1.5,1 L6.5,5.5 L1.5,10" fill="none" stroke="#111" stroke-width="1.8" stroke-linecap="round" stroke-linejoin="round"/></svg>
<div class="r" style="left:260.50px;top:548.20px;width:626.00px;height:49.10px;background:#ffffff"></div>
<div class="r" style="left:280.50px;top:564.40px;width:16.60px;height:16.60px;box-sizing:border-box;border:2px solid #9a9a9a;border-radius:2px;background:#fff"></div>
<svg class="r" style="left:333.80px;top:562.90px;" width="19.5" height="19.5" viewBox="0 0 19.5 19.5"><circle cx="9.75" cy="9.75" r="8.6" fill="none" stroke="#111" stroke-width="1.8"/><path d="M7.6,5.8 L13,9.75 L7.6,13.7 Z" fill="#111"/></svg>
<div class="t" style="left:359.20px;top:555.80px;font-size:13.3px;color:#333;font-weight:400;font-family:'Liberation Sans', sans-serif;">Geräteinformation</div>
<div class="t" style="left:359.20px;top:578.50px;font-size:13.3px;color:#333;font-weight:400;font-family:'Liberation Sans', sans-serif;">abfragen</div>
<svg class="r" style="left:555.80px;top:561.70px;" width="13.8" height="21.5" viewBox="0 0 13.8 21.5"><rect x="1" y="1" width="11.8" height="19.5" rx="1" fill="none" stroke="#8db92e" stroke-width="1.9"/><path d="M1,4.4 L12.8,4.4 M1,17.2 L12.8,17.2" stroke="#8db92e" stroke-width="1.6"/><path d="M3.6,10.6 L6,13 L10.2,7.4" fill="none" stroke="#8db92e" stroke-width="1.7" stroke-linecap="round"/></svg>
<div class="t" style="left:592.30px;top:567.50px;font-size:13.3px;color:#8db92e;font-weight:400;font-family:'Liberation Sans', sans-serif;">Ausgeführt</div>
<div class="r" style="left:723px;top:548.20px;width:106px;height:49.1px;overflow:hidden">
<div class="t" style="left:-0.80px;top:19.30px;font-size:13.3px;color:#333;font-weight:400;font-family:'Liberation Sans', sans-serif;">Query device infor</div>
</div>
<div class="r" style="left:260.50px;top:597.30px;width:626.00px;height:49.10px;background:#fafafa"></div>
<div class="r" style="left:280.50px;top:613.50px;width:16.60px;height:16.60px;box-sizing:border-box;border:2px solid #9a9a9a;border-radius:2px;background:#fff"></div>
<svg class="r" style="left:333.00px;top:611.30px;" width="21" height="21" viewBox="0 0 21 21"><circle cx="10.5" cy="10.5" r="7.2" fill="none" stroke="#111" stroke-width="1.8"/><circle cx="10.5" cy="10.5" r="3.6" fill="#111"/><path d="M10.5,0.5 L10.5,3.3 M10.5,17.7 L10.5,20.5 M0.5,10.5 L3.3,10.5 M17.7,10.5 L20.5,10.5" stroke="#111" stroke-width="1.8"/></svg>
<div class="t" style="left:359.20px;top:616.60px;font-size:13.3px;color:#333;font-weight:400;font-family:'Liberation Sans', sans-serif;">Gerät orten</div>
<svg class="r" style="left:555.80px;top:610.80px;" width="13.8" height="21.5" viewBox="0 0 13.8 21.5"><rect x="1" y="1" width="11.8" height="19.5" rx="1" fill="none" stroke="#8db92e" stroke-width="1.9"/><path d="M1,4.4 L12.8,4.4 M1,17.2 L12.8,17.2" stroke="#8db92e" stroke-width="1.6"/><path d="M3.6,10.6 L6,13 L10.2,7.4" fill="none" stroke="#8db92e" stroke-width="1.7" stroke-linecap="round"/></svg>
<div class="t" style="left:592.30px;top:616.60px;font-size:13.3px;color:#8db92e;font-weight:400;font-family:'Liberation Sans', sans-serif;">Ausgeführt</div>
<div class="r" style="left:723px;top:597.30px;width:106px;height:49.1px;overflow:hidden">
<div class="t" style="left:-0.80px;top:7.60px;font-size:13.3px;color:#333;font-weight:400;font-family:'Liberation Sans', sans-serif;">Determined curren</div>
<div class="t" style="left:-0.80px;top:30.30px;font-size:13.3px;color:#333;font-weight:400;font-family:'Liberation Sans', sans-serif;">age PT0.076S</div>
</div>
<div class="r" style="left:260.50px;top:646.40px;width:626.00px;height:49.10px;background:#ffffff"></div>
<div class="r" style="left:280.50px;top:662.60px;width:16.60px;height:16.60px;box-sizing:border-box;border:2px solid #9a9a9a;border-radius:2px;background:#fff"></div>
<svg class="r" style="left:336.60px;top:664.20px;" width="13.5" height="13.5" viewBox="0 0 13.5 13.5"><path d="M0,2 L5.8,1.2 L5.8,6.3 L0,6.3 Z M6.6,1.1 L13.5,0 L13.5,6.3 L6.6,6.3 Z M0,7.1 L5.8,7.1 L5.8,12.2 L0,11.4 Z M6.6,7.1 L13.5,7.1 L13.5,13.4 L6.6,12.3 Z" fill="#111"/></svg>
<div class="t" style="left:359.20px;top:654.00px;font-size:13.3px;color:#333;font-weight:400;font-family:'Liberation Sans', sans-serif;">Bereitstellung von</div>
<div class="t" style="left:359.20px;top:676.70px;font-size:13.3px;color:#333;font-weight:400;font-family:'Liberation Sans', sans-serif;">Nextcloud Desktop...</div>
<svg class="r" style="left:555.80px;top:659.90px;" width="13.8" height="21.5" viewBox="0 0 13.8 21.5"><rect x="1" y="1" width="11.8" height="19.5" rx="1" fill="none" stroke="#e8672a" stroke-width="1.9"/><path d="M1,4.4 L12.8,4.4 M1,17.2 L12.8,17.2" stroke="#e8672a" stroke-width="1.6"/><path d="M6.9,6.6 L6.9,11.8" stroke="#e8672a" stroke-width="2"/><circle cx="6.9" cy="14" r="1.1" fill="#e8672a"/></svg>
<div class="t" style="left:592.30px;top:665.70px;font-size:13.3px;color:#e8672a;font-weight:400;font-family:'Liberation Sans', sans-serif;">Fehler</div>
<div class="r" style="left:723px;top:646.40px;width:106px;height:49.1px;overflow:hidden">
<div class="t" style="left:-0.80px;top:7.60px;font-size:13.3px;color:#333;font-weight:400;font-family:'Liberation Sans', sans-serif;">Installation of "Nex</div>
<div class="t" style="left:-0.80px;top:30.30px;font-size:13.3px;color:#333;font-weight:400;font-family:'Liberation Sans', sans-serif;">code: "-197833518</div>
</div>
<div class="r" style="left:260.50px;top:695.50px;width:626.00px;height:49.10px;background:#fafafa"></div>
<div class="r" style="left:280.50px;top:711.70px;width:16.60px;height:16.60px;box-sizing:border-box;border:2px solid #9a9a9a;border-radius:2px;background:#fff"></div>
<svg class="r" style="left:336.00px;top:709.00px;" width="18" height="22" viewBox="0 0 18 22"><rect x="1" y="1" width="11.5" height="20" rx="1.8" fill="none" stroke="#111" stroke-width="1.9"/><rect x="1" y="1" width="11.5" height="3" fill="#111"/><rect x="1" y="18" width="11.5" height="3" fill="#111"/><circle cx="12.5" cy="11" r="4.2" fill="#fafafa"/><circle cx="12.5" cy="11" r="2.8" fill="none" stroke="#111" stroke-width="1.1" stroke-dasharray="1.4 0.8"/><circle cx="12.5" cy="11" r="1" fill="#111"/></svg>
<div class="t" style="left:359.20px;top:714.80px;font-size:13.3px;color:#333;font-weight:400;font-family:'Liberation Sans', sans-serif;">Richtlinie ändern</div>
<svg class="r" style="left:555.80px;top:709.00px;" width="13.8" height="21.5" viewBox="0 0 13.8 21.5"><rect x="1" y="1" width="11.8" height="19.5" rx="1" fill="none" stroke="#8db92e" stroke-width="1.9"/><path d="M1,4.4 L12.8,4.4 M1,17.2 L12.8,17.2" stroke="#8db92e" stroke-width="1.6"/><path d="M3.6,10.6 L6,13 L10.2,7.4" fill="none" stroke="#8db92e" stroke-width="1.7" stroke-linecap="round"/></svg>
<div class="t" style="left:592.30px;top:714.80px;font-size:13.3px;color:#8db92e;font-weight:400;font-family:'Liberation Sans', sans-serif;">Ausgeführt</div>
<svg class="r" style="left:854.50px;top:714.00px;" width="8" height="11" viewBox="0 0 8 11"><path d="M1.5,1 L6.5,5.5 L1.5,10" fill="none" stroke="#111" stroke-width="1.8" stroke-linecap="round" stroke-linejoin="round"/></svg>
<div class="r" style="left:260.50px;top:744.60px;width:626.00px;height:46.00px;background:#ffffff"></div>
<div class="r" style="left:280.50px;top:760.80px;width:16.60px;height:16.60px;box-sizing:border-box;border:2px solid #9a9a9a;border-radius:2px;background:#fff"></div>
<svg class="r" style="left:336.60px;top:762.40px;" width="13.5" height="13.5" viewBox="0 0 13.5 13.5"><path d="M0,2 L5.8,1.2 L5.8,6.3 L0,6.3 Z M6.6,1.1 L13.5,0 L13.5,6.3 L6.6,6.3 Z M0,7.1 L5.8,7.1 L5.8,12.2 L0,11.4 Z M6.6,7.1 L13.5,7.1 L13.5,13.4 L6.6,12.3 Z" fill="#111"/></svg>
<div class="t" style="left:359.20px;top:752.20px;font-size:13.3px;color:#333;font-weight:400;font-family:'Liberation Sans', sans-serif;">Bereitstellung von</div>
<div class="t" style="left:359.20px;top:774.90px;font-size:13.3px;color:#333;font-weight:400;font-family:'Liberation Sans', sans-serif;">Nextcloud Desktop...</div>
<svg class="r" style="left:555.80px;top:758.10px;" width="13.8" height="21.5" viewBox="0 0 13.8 21.5"><rect x="1" y="1" width="11.8" height="19.5" rx="1" fill="none" stroke="#e8672a" stroke-width="1.9"/><path d="M1,4.4 L12.8,4.4 M1,17.2 L12.8,17.2" stroke="#e8672a" stroke-width="1.6"/><path d="M6.9,6.6 L6.9,11.8" stroke="#e8672a" stroke-width="2"/><circle cx="6.9" cy="14" r="1.1" fill="#e8672a"/></svg>
<div class="t" style="left:592.30px;top:763.90px;font-size:13.3px;color:#e8672a;font-weight:400;font-family:'Liberation Sans', sans-serif;">Fehler</div>
<div class="r" style="left:723px;top:744.60px;width:106px;height:46px;overflow:hidden">
<div class="t" style="left:-0.80px;top:7.60px;font-size:13.3px;color:#333;font-weight:400;font-family:'Liberation Sans', sans-serif;">Installation of "Nex</div>
<div class="t" style="left:-0.80px;top:30.30px;font-size:13.3px;color:#333;font-weight:400;font-family:'Liberation Sans', sans-serif;">code: "-197833518</div>
</div>
<div class="r" style="left:829.50px;top:403.00px;width:57.00px;height:47.00px;background:#eeeeee;box-shadow:0 2px 3px rgba(0,0,0,0.12)"></div>
<div class="r" style="left:817.00px;top:403.00px;width:12.50px;height:393.00px;background:linear-gradient(90deg, rgba(0,0,0,0) 0%, rgba(0,0,0,0.06) 45%, rgba(0,0,0,0.42) 100%)"></div>
<div class="r" style="left:886.50px;top:403.00px;width:14.00px;height:393.00px;background:#fff"></div>
<div class="r" style="left:889.80px;top:406.00px;width:7.60px;height:27.00px;background:#c6c6c6;border-radius:4px"></div>
<div class="r" style="left:260.50px;top:796.00px;width:640.00px;height:14.00px;background:#fbfbfb;border-top:1px solid #f0f0f0;box-sizing:border-box"></div>
<div class="r" style="left:263.00px;top:800.30px;width:217.50px;height:7.80px;background:#c4c4c4;border-radius:4px"></div>
<div class="r" style="left:260.50px;top:810.00px;width:640.00px;height:53.50px;background:#f4f4f4;border-top:1px solid #ececec;box-sizing:border-box"></div>
<div class="t" style="left:462.30px;top:830.60px;font-size:14.05px;color:#444;font-weight:400;font-family:'Liberation Sans', sans-serif;">Einträge pro Seite:</div>
<div class="r" style="left:586.00px;top:818.50px;width:68.70px;height:37.80px;box-sizing:border-box;border:1px solid #9e9e9e;border-radius:3px"></div>
<div class="t" style="left:600.70px;top:833.20px;font-size:11.4px;color:#333;font-weight:400;font-family:'Liberation Sans', sans-serif;">100</div>
<svg class="r" style="left:631.50px;top:834.50px;" width="9" height="5" viewBox="0 0 9 5"><path d="M0,0 L9,0 L4.5,5 Z" fill="#444"/></svg>
<div class="t" style="left:689.30px;top:830.60px;font-size:14.1px;color:#333;font-weight:400;font-family:'Liberation Sans', sans-serif;">1 - 95 von 95</div>
<svg class="r" style="left:821.50px;top:832.00px;" width="8" height="12" viewBox="0 0 8 12"><path d="M6.5,1 L1.5,6 L6.5,11" fill="none" stroke="#cfcfcf" stroke-width="1.5"/></svg>
<svg class="r" style="left:866.50px;top:832.00px;" width="8" height="12" viewBox="0 0 8 12"><path d="M1.5,1 L6.5,6 L1.5,11" fill="none" stroke="#cfcfcf" stroke-width="1.5"/></svg>
<svg class="r" style="left:855.50px;top:197.00px;z-index:50" width="64" height="64" viewBox="0 0 64 64"><g transform="translate(32,32) rotate(-5.6)"><circle r="17" fill="#ef4823"/><path d="M10.47,13.40 Q17.34,5.10 25.52,0 Q17.34,-5.10 10.47,-13.40 Z" fill="#ef4823"/></g></svg>
<div class="t" style="left:872.50px;top:220.60px;width:30px;text-align:center;font-size:18px;color:#fff;z-index:51;font-family:'Liberation Sans',sans-serif">4</div>
<svg class="r" style="left:855.70px;top:320.60px;z-index:50" width="64" height="64" viewBox="0 0 64 64"><g transform="translate(32,32) rotate(140.3)"><circle r="17" fill="#ef4823"/><path d="M10.47,13.40 Q17.34,5.10 25.07,0 Q17.34,-5.10 10.47,-13.40 Z" fill="#ef4823"/></g></svg>
<div class="t" style="left:872.70px;top:344.20px;width:30px;text-align:center;font-size:18px;color:#fff;z-index:51;font-family:'Liberation Sans',sans-serif">3</div>
<div class="r" style="left:916.00px;top:0.00px;width:884.00px;height:873.00px;background:#232327;z-index:8"></div>
<div class="r" style="left:915.20px;top:0.00px;width:1.50px;height:873.00px;background:#2e2e32;z-index:9"></div>
<div class="r" style="left:917.00px;top:0.00px;width:883.00px;height:23.30px;background:#3a393e;z-index:10"></div>
<div class="r" style="left:917.00px;top:23.30px;width:883.00px;height:1.40px;background:#4a4a50;z-index:10"></div>
<svg class="r" style="left:925.00px;top:4.30px;z-index:10" width="14" height="14" viewBox="0 0 14 14"><g fill="#c7c7c7"><rect x="0" y="0" width="1.4" height="1.4"/><rect x="3.2" y="0" width="1.4" height="1.4"/><rect x="6.4" y="0" width="1.4" height="1.4"/><rect x="9.6" y="0" width="1.4" height="1.4"/><rect x="12.4" y="0" width="1.4" height="1.4"/>
<rect x="0" y="3.2" width="1.4" height="1.4"/><rect x="0" y="6.4" width="1.4" height="1.4"/><rect x="0" y="9.6" width="1.4" height="1.4"/><rect x="0" y="12.4" width="1.4" height="1.4"/><rect x="3.2" y="12.4" width="1.4" height="1.4"/><rect x="12.4" y="3.2" width="1.4" height="1.4"/></g>
<path d="M5.6,6 L11,6 M5.6,6 L5.6,11.4 M5.8,6.2 L13.2,13.6" stroke="#c7c7c7" stroke-width="1.5" fill="none"/></svg>
<svg class="r" style="left:950.00px;top:5.20px;z-index:10" width="16" height="12.2" viewBox="0 0 16 12.2"><path d="M2.2,11.2 L2.2,0.8 L15.6,0.8" fill="none" stroke="#c7c7c7" stroke-width="1.5"/><path d="M0,11.3 L8,11.3" stroke="#c7c7c7" stroke-width="1.6"/><rect x="9.8" y="3.6" width="5.4" height="7.8" fill="none" stroke="#c7c7c7" stroke-width="1.5"/></svg>
<div class="r" style="left:975.00px;top:3.70px;width:1.00px;height:15.00px;background:#55555a;z-index:10"></div>
<div class="t" style="left:986.50px;top:6.70px;font-size:12.27px;color:#d8d8d8;font-weight:400;font-family:'Liberation Sans', sans-serif;z-index:10;">Elements</div>
<div class="t" style="left:1056.00px;top:6.70px;font-size:12.2px;color:#d8d8d8;font-weight:400;font-family:'Liberation Sans', sans-serif;z-index:10;">Console</div>
<div class="t" style="left:1119.00px;top:6.70px;font-size:12.3px;color:#d8d8d8;font-weight:400;font-family:'Liberation Sans', sans-serif;z-index:10;">Sources</div>
<div class="t" style="left:1183.70px;top:6.70px;font-size:12.35px;color:#a8b0ff;font-weight:400;font-family:'Liberation Sans', sans-serif;z-index:10;">Network</div>
<div class="t" style="left:1249.00px;top:6.70px;font-size:12.45px;color:#d8d8d8;font-weight:400;font-family:'Liberation Sans', sans-serif;z-index:10;">Performance</div>
<div class="t" style="left:1338.70px;top:6.70px;font-size:12.4px;color:#d8d8d8;font-weight:400;font-family:'Liberation Sans', sans-serif;z-index:10;">Memory</div>
<div class="t" style="left:1403.00px;top:6.70px;font-size:12.58px;color:#d8d8d8;font-weight:400;font-family:'Liberation Sans', sans-serif;z-index:10;">Application</div>
<div class="t" style="left:1484.00px;top:6.70px;font-size:12.68px;color:#d8d8d8;font-weight:400;font-family:'Liberation Sans', sans-serif;z-index:10;">Security</div>
<div class="t" style="left:1557.75px;top:6.70px;font-size:12.57px;color:#d8d8d8;font-weight:400;font-family:'Liberation Sans', sans-serif;z-index:10;">Lighthouse</div>
<div class="r" style="left:1173.50px;top:21.60px;width:67.00px;height:2.60px;background:#a8b0ff;border-radius:2px 2px 0 0;z-index:10"></div>
<svg class="r" style="left:1632.50px;top:6.50px;z-index:10" width="12.5" height="10" viewBox="0 0 12.5 10"><path d="M1,1 L5,5 L1,9 M6.8,1 L10.8,5 L6.8,9" fill="none" stroke="#c7c7c7" stroke-width="1.4"/></svg>
<svg class="r" style="left:1686.50px;top:7.50px;z-index:10" width="11.5" height="10.5" viewBox="0 0 11.5 10.5"><path d="M0,1 Q0,0 1,0 L10,0 Q11,0 11,1 L11,7.2 Q11,8.2 10,8.2 L2.6,8.2 L0,10.4 Z" fill="#a8b0ff"/><path d="M2.4,2.8 L8.6,2.8 M2.4,5.2 L6.4,5.2" stroke="#55577a" stroke-width="1.2"/></svg>
<div class="t" style="left:1698.50px;top:7.30px;font-size:12px;color:#d8d8d8;font-weight:400;font-family:'Liberation Sans', sans-serif;z-index:10;">3</div>
<div class="r" style="left:1715.00px;top:3.70px;width:1.00px;height:15.00px;background:#55555a;z-index:10"></div>
<svg class="r" style="left:1725.00px;top:4.30px;z-index:10" width="14.5" height="14.5" viewBox="0 0 14.5 14.5"><polygon points="11.83,5.67 13.66,5.89 13.66,8.61 11.83,8.83 11.61,9.37 12.74,10.82 10.82,12.74 9.37,11.61 8.83,11.83 8.61,13.66 5.89,13.66 5.67,11.83 5.13,11.61 3.68,12.74 1.76,10.82 2.89,9.37 2.67,8.83 0.84,8.61 0.84,5.89 2.67,5.67 2.89,5.13 1.76,3.68 3.68,1.76 5.13,2.89 5.67,2.67 5.89,0.84 8.61,0.84 8.83,2.67 9.37,2.89 10.82,1.76 12.74,3.68 11.61,5.13" fill="none" stroke="#c7c7c7" stroke-width="1.3" stroke-linejoin="round"/><circle cx="7.25" cy="7.25" r="2.32" fill="#c7c7c7"/></svg>
<svg class="r" style="left:1756.50px;top:4.50px;z-index:10" width="5" height="14" viewBox="0 0 5 14"><circle cx="2.5" cy="2" r="1.5" fill="#c7c7c7"/><circle cx="2.5" cy="7" r="1.5" fill="#c7c7c7"/><circle cx="2.5" cy="12" r="1.5" fill="#c7c7c7"/></svg>
<svg class="r" style="left:1778.50px;top:6.30px;z-index:10" width="10.5" height="10.5" viewBox="0 0 10.5 10.5"><path d="M0.8,0.8 L9.7,9.7 M9.7,0.8 L0.8,9.7" stroke="#c7c7c7" stroke-width="1.5"/></svg>
<div class="r" style="left:917.00px;top:24.70px;width:883.00px;height:24.60px;background:#252529;z-index:10"></div>
<div class="r" style="left:917.00px;top:49.30px;width:883.00px;height:1.20px;background:#4a4a50;z-index:10"></div>
<svg class="r" style="left:924.00px;top:29.00px;z-index:10" width="16" height="16" viewBox="0 0 16 16"><circle cx="7.8" cy="7.65" r="6.8" fill="none" stroke="#ee6b62" stroke-width="1.5"/><rect x="5.1" y="5" width="5.3" height="5.3" fill="#ee6b62"/></svg>
<svg class="r" style="left:950.50px;top:29.00px;z-index:10" width="16" height="16" viewBox="0 0 16 16"><circle cx="7.6" cy="7.65" r="6.6" fill="none" stroke="#c7c7c7" stroke-width="1.4"/><path d="M3,12.4 L12.2,2.9" stroke="#c7c7c7" stroke-width="1.4"/></svg>
<div class="r" style="left:975.00px;top:29.20px;width:1.00px;height:15.00px;background:#4e4e53;z-index:10"></div>
<svg class="r" style="left:987.00px;top:30.90px;z-index:10" width="15" height="14" viewBox="0 0 15 14"><path d="M0,0 L11.5,0 L7.2,5.6 L7.2,11.5 L4.3,11.5 L4.3,5.6 Z" fill="#a8b0ff"/><circle cx="11.8" cy="10.3" r="2.3" fill="#a8b0ff"/></svg>
<svg class="r" style="left:1012.50px;top:30.30px;z-index:10" width="14" height="14" viewBox="0 0 14 14"><circle cx="5.4" cy="5.4" r="4.4" fill="none" stroke="#c7c7c7" stroke-width="1.5"/><path d="M8.6,8.6 L13,13" stroke="#c7c7c7" stroke-width="1.7"/></svg>
<div class="r" style="left:1037.00px;top:29.20px;width:1.00px;height:15.00px;background:#4e4e53;z-index:10"></div>
<div class="r" style="left:1046.70px;top:31.00px;width:11.40px;height:11.40px;box-sizing:border-box;border:1.3px solid #8a8a8f;border-radius:2.5px;z-index:10"></div>
<div class="t" style="left:1063.00px;top:31.00px;font-size:12.09px;color:#d8d8d8;font-weight:400;font-family:'Liberation Sans', sans-serif;z-index:10;">Preserve log</div>
<div class="r" style="left:1139.00px;top:29.20px;width:1.00px;height:15.00px;background:#4e4e53;z-index:10"></div>
<div class="r" style="left:1149.20px;top:31.00px;width:11.40px;height:11.40px;box-sizing:border-box;border:1.3px solid #8a8a8f;border-radius:2.5px;z-index:10"></div>
<div class="t" style="left:1165.50px;top:31.00px;font-size:12.11px;color:#d8d8d8;font-weight:400;font-family:'Liberation Sans', sans-serif;z-index:10;">Disable cache</div>
<div class="r" style="left:1246.70px;top:25.80px;width:107.30px;height:21.70px;box-sizing:border-box;border:1px solid #5d5d62;border-radius:5px;z-index:10"></div>
<div class="t" style="left:1253.20px;top:31.00px;font-size:12.7px;color:#d8d8d8;font-weight:400;font-family:'Liberation Sans', sans-serif;z-index:10;">No throttling</div>
<svg class="r" style="left:1341.00px;top:34.50px;z-index:10" width="6.5" height="4" viewBox="0 0 6.5 4"><path d="M0,0 L6.5,0 L3.25,3.6 Z" fill="#c7c7c7"/></svg>
<svg class="r" style="left:1360.50px;top:29.50px;z-index:10" width="16" height="15" viewBox="0 0 16 15"><path d="M1,5 Q7.5,-0.6 14,5" fill="none" stroke="#c7c7c7" stroke-width="1.4"/><path d="M3.4,7.6 Q7.5,4 11.6,7.6" fill="none" stroke="#c7c7c7" stroke-width="1.4"/><path d="M5.8,10 Q7.5,8.6 9.2,10" fill="none" stroke="#c7c7c7" stroke-width="1.4"/><circle cx="12" cy="11.6" r="2.4" fill="none" stroke="#c7c7c7" stroke-width="1.4"/></svg>
<div class="r" style="left:1385.50px;top:29.20px;width:1.00px;height:15.00px;background:#4e4e53;z-index:10"></div>
<svg class="r" style="left:1396.50px;top:29.80px;z-index:10" width="13" height="14" viewBox="0 0 13 14"><path d="M6.5,10 L6.5,1.2 M2.6,5 L6.5,1.2 L10.4,5" fill="none" stroke="#c7c7c7" stroke-width="1.6"/><path d="M0.8,9.6 L0.8,12.8 L12.2,12.8 L12.2,9.6" fill="none" stroke="#c7c7c7" stroke-width="1.5"/></svg>
<svg class="r" style="left:1422.50px;top:29.80px;z-index:10" width="13" height="14" viewBox="0 0 13 14"><path d="M6.5,0.8 L6.5,9.4 M2.6,5.6 L6.5,9.4 L10.4,5.6" fill="none" stroke="#c7c7c7" stroke-width="1.6"/><path d="M0.8,9.6 L0.8,12.8 L12.2,12.8 L12.2,9.6" fill="none" stroke="#c7c7c7" stroke-width="1.5"/></svg>
<div class="r" style="left:1767.00px;top:29.20px;width:1.00px;height:15.00px;background:#4e4e53;z-index:10"></div>
<svg class="r" style="left:1776.30px;top:29.50px;z-index:10" width="15" height="15" viewBox="0 0 15 15"><polygon points="12.26,5.86 14.15,6.09 14.15,8.91 12.26,9.14 12.02,9.71 13.20,11.20 11.20,13.20 9.71,12.02 9.14,12.26 8.91,14.15 6.09,14.15 5.86,12.26 5.29,12.02 3.80,13.20 1.80,11.20 2.98,9.71 2.74,9.14 0.85,8.91 0.85,6.09 2.74,5.86 2.98,5.29 1.80,3.80 3.80,1.80 5.29,2.98 5.86,2.74 6.09,0.85 8.91,0.85 9.14,2.74 9.71,2.98 11.20,1.80 13.20,3.80 12.02,5.29" fill="none" stroke="#c7c7c7" stroke-width="1.3" stroke-linejoin="round"/><circle cx="7.5" cy="7.5" r="2.40" fill="#c7c7c7"/></svg>
<div class="r" style="left:917.00px;top:50.50px;width:883.00px;height:24.60px;background:#28282c;z-index:10"></div>
<div class="r" style="left:917.00px;top:75.00px;width:883.00px;height:1.20px;background:#4a4a50;z-index:10"></div>
<div class="r" style="left:921.30px;top:53.30px;width:185.40px;height:18.80px;background:#3a393e;border-radius:10px;z-index:10"></div>
<svg class="r" style="left:932.50px;top:57.50px;z-index:10" width="9" height="11" viewBox="0 0 9 11"><path d="M0.7,0.7 L8.3,0.7 L5.3,4.8 L5.3,10.4 L3.7,10.4 L3.7,4.8 Z" fill="none" stroke="#c7c7c7" stroke-width="1.2" stroke-linejoin="round"/></svg>
<div class="t" style="left:947.00px;top:56.80px;font-size:12px;color:#b0b0b0;font-weight:400;font-family:'Liberation Sans', sans-serif;z-index:10;">Filter</div>
<div class="r" style="left:1118.70px;top:57.00px;width:11.40px;height:11.40px;box-sizing:border-box;border:1.3px solid #8a8a8f;border-radius:2.5px;z-index:10"></div>
<div class="t" style="left:1134.60px;top:56.80px;font-size:12.5px;color:#d8d8d8;font-weight:400;font-family:'Liberation Sans', sans-serif;z-index:10;">Invert</div>
<div class="r" style="left:1176.50px;top:55.00px;width:1.00px;height:15.00px;background:#4e4e53;z-index:10"></div>
<div class="t" style="left:1193.50px;top:56.80px;font-size:12px;color:#d8d8d8;font-weight:400;font-family:'Liberation Sans', sans-serif;z-index:10;">More filters</div>
<svg class="r" style="left:1261.50px;top:59.50px;z-index:10" width="8" height="6" viewBox="0 0 8 6"><path d="M0,0 L7.5,0 L3.75,5.4 Z" fill="#c7c7c7"/></svg>
<div class="r" style="left:1285.30px;top:53.70px;width:24.20px;height:17.10px;box-sizing:border-box;border:1px solid #707076;border-radius:6px;z-index:10"></div>
<div class="t" style="left:1285.30px;top:56.60px;font-size:11.6px;color:#e0e0e0;font-weight:400;font-family:'Liberation Sans', sans-serif;z-index:10;width:24.20px;text-align:center">All</div>
<div class="r" style="left:1318.30px;top:53.70px;width:64.70px;height:17.10px;background:#434868;border-radius:6px;z-index:10"></div>
<div class="t" style="left:1318.30px;top:56.60px;font-size:11.6px;color:#e8e8f8;font-weight:400;font-family:'Liberation Sans', sans-serif;z-index:10;width:64.70px;text-align:center">Fetch/XHR</div>
<div class="r" style="left:1387.00px;top:53.70px;width:31.00px;height:17.10px;box-sizing:border-box;border:1px solid #707076;border-radius:6px;z-index:10"></div>
<div class="t" style="left:1387.00px;top:56.60px;font-size:11.6px;color:#e0e0e0;font-weight:400;font-family:'Liberation Sans', sans-serif;z-index:10;width:31.00px;text-align:center">Doc</div>
<div class="r" style="left:1422.50px;top:53.70px;width:32.00px;height:17.10px;box-sizing:border-box;border:1px solid #707076;border-radius:6px;z-index:10"></div>
<div class="t" style="left:1422.50px;top:56.60px;font-size:11.6px;color:#e0e0e0;font-weight:400;font-family:'Liberation Sans', sans-serif;z-index:10;width:32.00px;text-align:center">CSS</div>
<div class="r" style="left:1458.75px;top:53.70px;width:23.25px;height:17.10px;box-sizing:border-box;border:1px solid #707076;border-radius:6px;z-index:10"></div>
<div class="t" style="left:1458.75px;top:56.60px;font-size:11.6px;color:#e0e0e0;font-weight:400;font-family:'Liberation Sans', sans-serif;z-index:10;width:23.25px;text-align:center">JS</div>
<div class="r" style="left:1486.50px;top:53.70px;width:33.00px;height:17.10px;box-sizing:border-box;border:1px solid #707076;border-radius:6px;z-index:10"></div>
<div class="t" style="left:1486.50px;top:56.60px;font-size:11.6px;color:#e0e0e0;font-weight:400;font-family:'Liberation Sans', sans-serif;z-index:10;width:33.00px;text-align:center">Font</div>
<div class="r" style="left:1524.25px;top:53.70px;width:29.50px;height:17.10px;box-sizing:border-box;border:1px solid #707076;border-radius:6px;z-index:10"></div>
<div class="t" style="left:1524.25px;top:56.60px;font-size:11.6px;color:#e0e0e0;font-weight:400;font-family:'Liberation Sans', sans-serif;z-index:10;width:29.50px;text-align:center">Img</div>
<div class="r" style="left:1558.25px;top:53.70px;width:41.25px;height:17.10px;box-sizing:border-box;border:1px solid #707076;border-radius:6px;z-index:10"></div>
<div class="t" style="left:1558.25px;top:56.60px;font-size:11.6px;color:#e0e0e0;font-weight:400;font-family:'Liberation Sans', sans-serif;z-index:10;width:41.25px;text-align:center">Media</div>
<div class="r" style="left:1604.25px;top:53.70px;width:54.50px;height:17.10px;box-sizing:border-box;border:1px solid #707076;border-radius:6px;z-index:10"></div>
<div class="t" style="left:1604.25px;top:56.60px;font-size:11.6px;color:#e0e0e0;font-weight:400;font-family:'Liberation Sans', sans-serif;z-index:10;width:54.50px;text-align:center">Manifest</div>
<div class="r" style="left:1662.50px;top:53.70px;width:45.50px;height:17.10px;box-sizing:border-box;border:1px solid #707076;border-radius:6px;z-index:10"></div>
<div class="t" style="left:1662.50px;top:56.60px;font-size:11.6px;color:#e0e0e0;font-weight:400;font-family:'Liberation Sans', sans-serif;z-index:10;width:45.50px;text-align:center">Socket</div>
<div class="r" style="left:1712.50px;top:53.70px;width:41.25px;height:17.10px;box-sizing:border-box;border:1px solid #707076;border-radius:6px;z-index:10"></div>
<div class="t" style="left:1712.50px;top:56.60px;font-size:11.6px;color:#e0e0e0;font-weight:400;font-family:'Liberation Sans', sans-serif;z-index:10;width:41.25px;text-align:center">Wasm</div>
<div class="r" style="left:1758.25px;top:53.70px;width:39.25px;height:17.10px;box-sizing:border-box;border:1px solid #707076;border-radius:6px;z-index:10"></div>
<div class="t" style="left:1758.25px;top:56.60px;font-size:11.6px;color:#e0e0e0;font-weight:400;font-family:'Liberation Sans', sans-serif;z-index:10;width:39.25px;text-align:center">Other</div>
<div class="r" style="left:1313.50px;top:55.00px;width:1.00px;height:15.00px;background:#4e4e53;z-index:10"></div>
<div class="r" style="left:1025.80px;top:76.20px;width:1.00px;height:75.10px;background:#48484d;z-index:10"></div>
<div class="r" style="left:1135.80px;top:76.20px;width:1.00px;height:75.10px;background:#48484d;z-index:10"></div>
<div class="r" style="left:1244.80px;top:76.20px;width:1.00px;height:75.10px;background:#48484d;z-index:10"></div>
<div class="r" style="left:1354.80px;top:76.20px;width:1.00px;height:75.10px;background:#48484d;z-index:10"></div>
<div class="r" style="left:1464.00px;top:76.20px;width:1.00px;height:75.10px;background:#48484d;z-index:10"></div>
<div class="r" style="left:1572.80px;top:76.20px;width:1.00px;height:75.10px;background:#48484d;z-index:10"></div>
<div class="r" style="left:1683.30px;top:76.20px;width:1.00px;height:75.10px;background:#48484d;z-index:10"></div>
<div class="r" style="left:1792.50px;top:76.20px;width:1.00px;height:75.10px;background:#48484d;z-index:10"></div>
<div class="t" style="left:956.30px;top:80.40px;font-size:10px;color:#cfcfcf;font-weight:700;font-family:'Liberation Sans', sans-serif;z-index:10;width:67.5px;text-align:right">100 ms</div>
<div class="t" style="left:1066.30px;top:80.40px;font-size:10px;color:#cfcfcf;font-weight:700;font-family:'Liberation Sans', sans-serif;z-index:10;width:67.5px;text-align:right">200 ms</div>
<div class="t" style="left:1175.30px;top:80.40px;font-size:10px;color:#cfcfcf;font-weight:700;font-family:'Liberation Sans', sans-serif;z-index:10;width:67.5px;text-align:right">300 ms</div>
<div class="t" style="left:1285.30px;top:80.40px;font-size:10px;color:#cfcfcf;font-weight:700;font-family:'Liberation Sans', sans-serif;z-index:10;width:67.5px;text-align:right">400 ms</div>
<div class="t" style="left:1394.50px;top:80.40px;font-size:10px;color:#cfcfcf;font-weight:700;font-family:'Liberation Sans', sans-serif;z-index:10;width:67.5px;text-align:right">500 ms</div>
<div class="t" style="left:1503.30px;top:80.40px;font-size:10px;color:#cfcfcf;font-weight:700;font-family:'Liberation Sans', sans-serif;z-index:10;width:67.5px;text-align:right">600 ms</div>
<div class="t" style="left:1613.80px;top:80.40px;font-size:10px;color:#cfcfcf;font-weight:700;font-family:'Liberation Sans', sans-serif;z-index:10;width:67.5px;text-align:right">700 ms</div>
<div class="t" style="left:1723.00px;top:80.40px;font-size:10px;color:#cfcfcf;font-weight:700;font-family:'Liberation Sans', sans-serif;z-index:10;width:67.5px;text-align:right">800 ms</div>
<div class="r" style="left:921.00px;top:98.00px;width:491.90px;height:8.80px;background:#47446a;z-index:10"></div>
<div class="r" style="left:921.30px;top:99.90px;width:14.00px;height:4.30px;background:#f2f2f2;z-index:10"></div>
<div class="r" style="left:935.30px;top:99.90px;width:474.30px;height:4.30px;background:#3bbd5c;z-index:10"></div>
<div class="r" style="left:1409.60px;top:99.90px;width:1.60px;height:4.30px;background:#4a8cf0;z-index:10"></div>
<div class="r" style="left:1413.00px;top:102.60px;width:5.40px;height:1.80px;background:#4a8cf0;z-index:10"></div>
<div class="r" style="left:1419.80px;top:102.60px;width:4.20px;height:1.80px;background:#3bbd5c;z-index:10"></div>
<div class="r" style="left:1425.00px;top:102.60px;width:8.00px;height:1.80px;background:#4a8cf0;z-index:10"></div>
<div class="r" style="left:916.50px;top:75.70px;width:5.00px;height:17.60px;box-sizing:border-box;border:1.2px solid #a8b0ff;border-radius:0 3px 3px 0;background:#3c3c5c;z-index:10"></div>
<div class="r" style="left:916.50px;top:93.00px;width:1.60px;height:58.30px;background:#a8b0ff;z-index:10"></div>
<div class="r" style="left:1796.80px;top:75.70px;width:3.50px;height:17.60px;box-sizing:border-box;border:1.2px solid #a8b0ff;border-radius:3px 0 0 3px;background:#3c3c5c;z-index:10"></div>
<div class="r" style="left:917.00px;top:151.30px;width:883.00px;height:1.20px;background:#4a4a50;z-index:10"></div>
<div class="r" style="left:917.00px;top:152.50px;width:105.00px;height:23.80px;background:#252529;z-index:10"></div>
<div class="r" style="left:1022.00px;top:152.50px;width:778.00px;height:23.80px;background:#3a393e;z-index:10"></div>
<div class="r" style="left:917.00px;top:176.10px;width:883.00px;height:1.10px;background:#4a4a50;z-index:10"></div>
<div class="r" style="left:1021.60px;top:152.50px;width:1.20px;height:507.00px;background:#4a4a50;z-index:10"></div>
<div class="t" style="left:921.00px;top:158.30px;font-size:12px;color:#d8d8d8;font-weight:400;font-family:'Liberation Sans', sans-serif;z-index:10;">Name</div>
<div class="r" style="left:917.00px;top:177.20px;width:104.60px;height:19.90px;background:#28282c;z-index:10"></div>
<svg class="r" style="left:921.60px;top:181.20px;z-index:10" width="13" height="12" viewBox="0 0 13 12"><path d="M3.4,0.8 Q1.6,0.8 1.6,2.6 L1.6,4.6 Q1.6,6 0.5,6 Q1.6,6 1.6,7.4 L1.6,9.4 Q1.6,11.2 3.4,11.2 M9.6,0.8 Q11.4,0.8 11.4,2.6 L11.4,4.6 Q11.4,6 12.5,6 Q11.4,6 11.4,7.4 L11.4,9.4 Q11.4,11.2 9.6,11.2" fill="none" stroke="#ee8a4c" stroke-width="1.3"/><circle cx="6.5" cy="3" r="0.95" fill="#ee8a4c"/><path d="M6.5,5 L6.5,9.4" stroke="#ee8a4c" stroke-width="1.4"/></svg>
<div class="t" style="left:938.20px;top:182.80px;font-size:11.8px;color:#e0e0e0;font-weight:400;font-family:'Liberation Sans', sans-serif;z-index:10;">019A29BF-A...</div>
<div class="r" style="left:917.00px;top:197.10px;width:104.60px;height:19.90px;background:#1e1e21;z-index:10"></div>
<svg class="r" style="left:921.60px;top:201.10px;z-index:10" width="13" height="12" viewBox="0 0 13 12"><path d="M3.4,0.8 Q1.6,0.8 1.6,2.6 L1.6,4.6 Q1.6,6 0.5,6 Q1.6,6 1.6,7.4 L1.6,9.4 Q1.6,11.2 3.4,11.2 M9.6,0.8 Q11.4,0.8 11.4,2.6 L11.4,4.6 Q11.4,6 12.5,6 Q11.4,6 11.4,7.4 L11.4,9.4 Q11.4,11.2 9.6,11.2" fill="none" stroke="#ee8a4c" stroke-width="1.3"/><circle cx="6.5" cy="3" r="0.95" fill="#ee8a4c"/><path d="M6.5,5 L6.5,9.4" stroke="#ee8a4c" stroke-width="1.4"/></svg>
<div class="t" style="left:938.20px;top:202.70px;font-size:11.8px;color:#e0e0e0;font-weight:400;font-family:'Liberation Sans', sans-serif;z-index:10;">query?tenan...</div>
<div class="r" style="left:917.00px;top:217.00px;width:104.60px;height:19.90px;background:#3e3e44;z-index:10"></div>
<svg class="r" style="left:921.60px;top:221.00px;z-index:10" width="13" height="12" viewBox="0 0 13 12"><path d="M3.4,0.8 Q1.6,0.8 1.6,2.6 L1.6,4.6 Q1.6,6 0.5,6 Q1.6,6 1.6,7.4 L1.6,9.4 Q1.6,11.2 3.4,11.2 M9.6,0.8 Q11.4,0.8 11.4,2.6 L11.4,4.6 Q11.4,6 12.5,6 Q11.4,6 11.4,7.4 L11.4,9.4 Q11.4,11.2 9.6,11.2" fill="none" stroke="#ee8a4c" stroke-width="1.3"/><circle cx="6.5" cy="3" r="0.95" fill="#ee8a4c"/><path d="M6.5,5 L6.5,9.4" stroke="#ee8a4c" stroke-width="1.4"/></svg>
<div class="t" style="left:938.20px;top:222.60px;font-size:11.8px;color:#e0e0e0;font-weight:400;font-family:'Liberation Sans', sans-serif;z-index:10;">actions?get...</div>
<div class="r" style="left:917.00px;top:236.90px;width:104.60px;height:19.90px;background:#1e1e21;z-index:10"></div>
<svg class="r" style="left:921.60px;top:240.90px;z-index:10" width="13" height="12" viewBox="0 0 13 12"><path d="M3.4,0.8 Q1.6,0.8 1.6,2.6 L1.6,4.6 Q1.6,6 0.5,6 Q1.6,6 1.6,7.4 L1.6,9.4 Q1.6,11.2 3.4,11.2 M9.6,0.8 Q11.4,0.8 11.4,2.6 L11.4,4.6 Q11.4,6 12.5,6 Q11.4,6 11.4,7.4 L11.4,9.4 Q11.4,11.2 9.6,11.2" fill="none" stroke="#ee8a4c" stroke-width="1.3"/><circle cx="6.5" cy="3" r="0.95" fill="#ee8a4c"/><path d="M6.5,5 L6.5,9.4" stroke="#ee8a4c" stroke-width="1.4"/></svg>
<div class="t" style="left:938.20px;top:242.50px;font-size:11.8px;color:#e0e0e0;font-weight:400;font-family:'Liberation Sans', sans-serif;z-index:10;">query?tenan...</div>
<div class="r" style="left:917.00px;top:256.80px;width:104.60px;height:19.90px;background:#28282c;z-index:10"></div>
<svg class="r" style="left:921.60px;top:260.80px;z-index:10" width="13" height="12" viewBox="0 0 13 12"><path d="M3.4,0.8 Q1.6,0.8 1.6,2.6 L1.6,4.6 Q1.6,6 0.5,6 Q1.6,6 1.6,7.4 L1.6,9.4 Q1.6,11.2 3.4,11.2 M9.6,0.8 Q11.4,0.8 11.4,2.6 L11.4,4.6 Q11.4,6 12.5,6 Q11.4,6 11.4,7.4 L11.4,9.4 Q11.4,11.2 9.6,11.2" fill="none" stroke="#ee8a4c" stroke-width="1.3"/><circle cx="6.5" cy="3" r="0.95" fill="#ee8a4c"/><path d="M6.5,5 L6.5,9.4" stroke="#ee8a4c" stroke-width="1.4"/></svg>
<div class="t" style="left:938.20px;top:262.40px;font-size:11.8px;color:#e0e0e0;font-weight:400;font-family:'Liberation Sans', sans-serif;z-index:10;">simplifiedRol...</div>
<div class="r" style="left:917.00px;top:276.70px;width:104.60px;height:357.00px;background:#1e1e21;z-index:10"></div>
<div class="r" style="left:917.00px;top:634.00px;width:105.00px;height:1.20px;background:#4a4a50;z-index:10"></div>
<div class="r" style="left:917.00px;top:635.20px;width:105.00px;height:24.00px;background:#252529;z-index:10"></div>
<div class="t" style="left:925.80px;top:641.80px;font-size:12.07px;color:#d0d0d0;font-weight:400;font-family:'Liberation Sans', sans-serif;z-index:10;">5 requests</div>
<div class="r" style="left:991.00px;top:642.00px;width:1.00px;height:13.50px;background:#55555a;z-index:10"></div>
<div class="r" style="left:995px;top:640px;width:26.5px;height:16px;overflow:hidden;z-index:10">
<div class="t" style="left:4.80px;top:1.80px;font-size:12.07px;color:#d0d0d0;font-weight:400;font-family:'Liberation Sans', sans-serif;">20.1</div>
</div>
<svg class="r" style="left:1036.40px;top:160.00px;z-index:10" width="10" height="9" viewBox="0 0 10 9"><path d="M0.7,0.5 L9.3,8.5 M9.3,0.5 L0.7,8.5" stroke="#c7c7c7" stroke-width="1.4"/></svg>
<div class="t" style="left:1064.90px;top:159.40px;font-size:12.3px;color:#d8d8d8;font-weight:400;font-family:'Liberation Sans', sans-serif;z-index:10;">Headers</div>
<div class="t" style="left:1130.10px;top:159.40px;font-size:12.23px;color:#d8d8d8;font-weight:400;font-family:'Liberation Sans', sans-serif;z-index:10;">Payload</div>
<div class="t" style="left:1192.40px;top:159.40px;font-size:12.2px;color:#a8b0ff;font-weight:400;font-family:'Liberation Sans', sans-serif;z-index:10;">Preview</div>
<div class="t" style="left:1254.85px;top:159.40px;font-size:12.0px;color:#d8d8d8;font-weight:400;font-family:'Liberation Sans', sans-serif;z-index:10;">Response</div>
<div class="t" style="left:1327.10px;top:159.40px;font-size:12.3px;color:#d8d8d8;font-weight:400;font-family:'Liberation Sans', sans-serif;z-index:10;">Initiator</div>
<div class="t" style="left:1389.10px;top:159.40px;font-size:12.6px;color:#d8d8d8;font-weight:400;font-family:'Liberation Sans', sans-serif;z-index:10;">Timing</div>
<div class="t" style="left:1445.35px;top:159.40px;font-size:12.32px;color:#d8d8d8;font-weight:400;font-family:'Liberation Sans', sans-serif;z-index:10;">Adblock</div>
<div class="t" style="left:1508.60px;top:159.40px;font-size:12.34px;color:#d8d8d8;font-weight:400;font-family:'Liberation Sans', sans-serif;z-index:10;">Cookies</div>
<div class="r" style="left:1184.00px;top:174.60px;width:61.70px;height:2.60px;background:#a8b0ff;border-radius:2px 2px 0 0;z-index:10"></div>
<div class="r" style="left:1787.60px;top:177.20px;width:12.40px;height:468.00px;background:#2a2a2d;z-index:10"></div>
<div class="r" style="left:1791.60px;top:180.00px;width:7.40px;height:116.00px;background:#6c6c6f;border-radius:4px;z-index:10"></div>
<div class="r" style="left:1022.80px;top:645.30px;width:777.20px;height:13.60px;background:#2a2a2d;z-index:10"></div>
<div class="r" style="left:1025.00px;top:649.50px;width:69.80px;height:7.50px;background:#6c6c6f;border-radius:4px;z-index:10"></div>
<div class="t" style="left:1045.30px;top:187.80px;font-size:10.41px;font-family:'Liberation Mono',monospace;color:#e3e3e3;z-index:10;-webkit-text-stroke:0.25px currentColor;max-width:742.2px;overflow:hidden"><span style="color:#e3e3e3">{status: "0", message: "Following actions were retrieved", errors: {}, total: 95,…}</span></div>
<svg class="r" style="left:1034.00px;top:189.20px;z-index:10" width="7" height="5" viewBox="0 0 7 5"><path d="M0,0 L7,0 L3.5,4.6 Z" fill="#bdbdbd"/></svg>
<div class="t" style="left:1056.54px;top:202.88px;font-size:10.41px;font-family:'Liberation Mono',monospace;color:#e3e3e3;z-index:10;-webkit-text-stroke:0.25px currentColor;max-width:731.0px;overflow:hidden"><span style="color:#74a3e8">errors</span><span style="color:#e3e3e3">: {}</span></div>
<div class="t" style="left:1056.54px;top:217.96px;font-size:10.41px;font-family:'Liberation Mono',monospace;color:#e3e3e3;z-index:10;-webkit-text-stroke:0.25px currentColor;max-width:731.0px;overflow:hidden"><span style="color:#74a3e8">message</span><span style="color:#e3e3e3">: </span><span style="color:#4ec3ee">"Following actions were retrieved"</span></div>
<div class="t" style="left:1056.54px;top:233.04px;font-size:10.41px;font-family:'Liberation Mono',monospace;color:#e3e3e3;z-index:10;-webkit-text-stroke:0.25px currentColor;max-width:731.0px;overflow:hidden"><span style="color:#74a3e8">results</span><span style="color:#e3e3e3">: [{uuid: "019B2218-5ACA-7072-AB49-9BA9897CE24E", comment: "", state: "CANCELLED",…},…]</span></div>
<svg class="r" style="left:1045.24px;top:234.44px;z-index:10" width="7" height="5" viewBox="0 0 7 5"><path d="M0,0 L7,0 L3.5,4.6 Z" fill="#bdbdbd"/></svg>
<div class="t" style="left:1067.80px;top:248.12px;font-size:10.41px;font-family:'Liberation Mono',monospace;color:#e3e3e3;z-index:10;-webkit-text-stroke:0.25px currentColor;max-width:719.7px;overflow:hidden"><span style="color:#74a3e8">0</span><span style="color:#e3e3e3">: </span><span style="color:#e3e3e3">{uuid: "019B2218-5ACA-7072-AB49-9BA9897CE24E", comment: "", state: "CANCELLED",…}</span></div>
<svg class="r" style="left:1057.60px;top:247.72px;z-index:10" width="5" height="8" viewBox="0 0 5 8"><path d="M0,0 L4.6,3.75 L0,7.5 Z" fill="#bdbdbd"/></svg>
<div class="t" style="left:1067.80px;top:263.20px;font-size:10.41px;font-family:'Liberation Mono',monospace;color:#e3e3e3;z-index:10;-webkit-text-stroke:0.25px currentColor;max-width:719.7px;overflow:hidden"><span style="color:#74a3e8">1</span><span style="color:#e3e3e3">: </span><span style="color:#e3e3e3">{uuid: "019B20F8-A52B-74D7-A8C8-901BC727E9E8", comment: "Query device information", state: "EXECUTED",…}</span></div>
<svg class="r" style="left:1057.60px;top:262.80px;z-index:10" width="5" height="8" viewBox="0 0 5 8"><path d="M0,0 L4.6,3.75 L0,7.5 Z" fill="#bdbdbd"/></svg>
<div class="t" style="left:1067.80px;top:278.28px;font-size:10.41px;font-family:'Liberation Mono',monospace;color:#e3e3e3;z-index:10;-webkit-text-stroke:0.25px currentColor;max-width:719.7px;overflow:hidden"><span style="color:#74a3e8">2</span><span style="color:#e3e3e3">: </span><span style="color:#e3e3e3">{uuid: "019B20F8-A4FB-720F-90CC-402EC0FBCE61", comment: "Query device information", state: "EXECUTED",…}</span></div>
<svg class="r" style="left:1057.60px;top:277.88px;z-index:10" width="5" height="8" viewBox="0 0 5 8"><path d="M0,0 L4.6,3.75 L0,7.5 Z" fill="#bdbdbd"/></svg>
<div class="t" style="left:1067.80px;top:293.36px;font-size:10.41px;font-family:'Liberation Mono',monospace;color:#e3e3e3;z-index:10;-webkit-text-stroke:0.25px currentColor;max-width:719.7px;overflow:hidden"><span style="color:#74a3e8">3</span><span style="color:#e3e3e3">: </span><span style="color:#e3e3e3">{uuid: "019B20B2-E41A-7C02-AC21-73FD1FF6D4A4",…}</span></div>
<svg class="r" style="left:1057.60px;top:292.96px;z-index:10" width="5" height="8" viewBox="0 0 5 8"><path d="M0,0 L4.6,3.75 L0,7.5 Z" fill="#bdbdbd"/></svg>
<div class="t" style="left:1067.80px;top:308.44px;font-size:10.41px;font-family:'Liberation Mono',monospace;color:#e3e3e3;z-index:10;-webkit-text-stroke:0.25px currentColor;max-width:719.7px;overflow:hidden"><span style="color:#74a3e8">4</span><span style="color:#e3e3e3">: </span><span style="color:#e3e3e3">{uuid: "019B20AB-AA3B-791E-9555-88FA6CDD3118", comment: "", state: "ERROR", type: "DEPLOY_WINGET_APP",…}</span></div>
<svg class="r" style="left:1056.50px;top:309.84px;z-index:10" width="7" height="5" viewBox="0 0 7 5"><path d="M0,0 L7,0 L3.5,4.6 Z" fill="#bdbdbd"/></svg>
<div class="t" style="left:1079.60px;top:323.52px;font-size:10.41px;font-family:'Liberation Mono',monospace;color:#e3e3e3;z-index:10;-webkit-text-stroke:0.25px currentColor;max-width:707.9px;overflow:hidden"><span style="color:#74a3e8">channel</span><span style="color:#e3e3e3">: </span><span style="color:#4ec3ee">"COMPANION"</span></div>
<div class="t" style="left:1079.60px;top:338.60px;font-size:10.41px;font-family:'Liberation Mono',monospace;color:#e3e3e3;z-index:10;-webkit-text-stroke:0.25px currentColor;max-width:707.9px;overflow:hidden"><span style="color:#74a3e8">comment</span><span style="color:#e3e3e3">: </span><span style="color:#4ec3ee">""</span></div>
<div class="t" style="left:1079.60px;top:353.68px;font-size:10.41px;font-family:'Liberation Mono',monospace;color:#e3e3e3;z-index:10;-webkit-text-stroke:0.25px currentColor;max-width:707.9px;overflow:hidden"><span style="color:#74a3e8">createdBy</span><span style="color:#e3e3e3">: </span><span style="color:#4ec3ee">"robin.koehler"</span></div>
<div class="t" style="left:1079.60px;top:368.76px;font-size:10.41px;font-family:'Liberation Mono',monospace;color:#e3e3e3;z-index:10;-webkit-text-stroke:0.25px currentColor;max-width:707.9px;overflow:hidden"><span style="color:#74a3e8">createdByUuid</span><span style="color:#e3e3e3">: </span><span style="color:#4ec3ee">"6AAAD215-6110-45F2-B5E3-36660D114ED1"</span></div>
<div class="t" style="left:1079.60px;top:383.84px;font-size:10.41px;font-family:'Liberation Mono',monospace;color:#e3e3e3;z-index:10;-webkit-text-stroke:0.25px currentColor;max-width:707.9px;overflow:hidden"><span style="color:#74a3e8">creationDate</span><span style="color:#e3e3e3">: </span><span style="color:#a08af4">1765779679802</span></div>
<div class="t" style="left:1079.60px;top:398.92px;font-size:10.41px;font-family:'Liberation Mono',monospace;color:#e3e3e3;z-index:10;-webkit-text-stroke:0.25px currentColor;max-width:707.9px;overflow:hidden"><span style="color:#74a3e8">deliveredDate</span><span style="color:#e3e3e3">: </span><span style="color:#a08af4">1765784721624</span></div>
<div class="t" style="left:1079.60px;top:414.00px;font-size:10.41px;font-family:'Liberation Mono',monospace;color:#e3e3e3;z-index:10;-webkit-text-stroke:0.25px currentColor;max-width:707.9px;overflow:hidden"><span style="color:#74a3e8">details</span><span style="color:#e3e3e3">: </span><span style="color:#e3e3e3">{type: "DEPLOY_WINGET_APP", silent: false, appName: "Nextcloud Desktop", uninstallOnWithdraw: false,…}</span></div>
<svg class="r" style="left:1069.40px;top:413.60px;z-index:10" width="5" height="8" viewBox="0 0 5 8"><path d="M0,0 L4.6,3.75 L0,7.5 Z" fill="#bdbdbd"/></svg>
<div class="t" style="left:1079.60px;top:429.08px;font-size:10.41px;font-family:'Liberation Mono',monospace;color:#e3e3e3;z-index:10;-webkit-text-stroke:0.25px currentColor;max-width:707.9px;overflow:hidden"><span style="color:#74a3e8">device</span><span style="color:#e3e3e3">: </span><span style="color:#4ec3ee">"019A29BF-AA19-7999-BD80-951C21420E2F"</span></div>
<div class="t" style="left:1079.60px;top:444.16px;font-size:10.41px;font-family:'Liberation Mono',monospace;color:#e3e3e3;z-index:10;-webkit-text-stroke:0.25px currentColor;max-width:707.9px;overflow:hidden"><span style="color:#74a3e8">errorCode</span><span style="color:#e3e3e3">: </span><span style="color:#a08af4">-1978335189</span></div>
<div class="t" style="left:1079.60px;top:459.24px;font-size:10.41px;font-family:'Liberation Mono',monospace;color:#e3e3e3;z-index:10;-webkit-text-stroke:0.25px currentColor;max-width:707.9px;overflow:hidden"><span style="color:#74a3e8">errorMessage</span><span style="color:#e3e3e3">: </span><span style="color:#4ec3ee">"Installation of \"Nextcloud Desktop\" failed.  Exit code: \"-1978335189\", Error message: \"- \r\n</span></div>
<div class="t" style="left:1079.60px;top:474.32px;font-size:10.41px;font-family:'Liberation Mono',monospace;color:#e3e3e3;z-index:10;-webkit-text-stroke:0.25px currentColor;max-width:707.9px;overflow:hidden"><span style="color:#74a3e8">modificationDate</span><span style="color:#e3e3e3">: </span><span style="color:#a08af4">1765784724619</span></div>
<div class="t" style="left:1079.60px;top:489.40px;font-size:10.41px;font-family:'Liberation Mono',monospace;color:#e3e3e3;z-index:10;-webkit-text-stroke:0.25px currentColor;max-width:707.9px;overflow:hidden"><span style="color:#74a3e8">modifiedBy</span><span style="color:#e3e3e3">: </span><span style="color:#4ec3ee">"Rimpp.Johanna"</span></div>
<div class="t" style="left:1079.60px;top:504.48px;font-size:10.41px;font-family:'Liberation Mono',monospace;color:#e3e3e3;z-index:10;-webkit-text-stroke:0.25px currentColor;max-width:707.9px;overflow:hidden"><span style="color:#74a3e8">priority</span><span style="color:#e3e3e3">: </span><span style="color:#a08af4">500</span></div>
<div class="t" style="left:1079.60px;top:519.56px;font-size:10.41px;font-family:'Liberation Mono',monospace;color:#e3e3e3;z-index:10;-webkit-text-stroke:0.25px currentColor;max-width:707.9px;overflow:hidden"><span style="color:#74a3e8">retryCount</span><span style="color:#e3e3e3">: </span><span style="color:#a08af4">0</span></div>
<div class="t" style="left:1079.60px;top:534.64px;font-size:10.41px;font-family:'Liberation Mono',monospace;color:#e3e3e3;z-index:10;-webkit-text-stroke:0.25px currentColor;max-width:707.9px;overflow:hidden"><span style="color:#74a3e8">state</span><span style="color:#e3e3e3">: </span><span style="color:#4ec3ee">"ERROR"</span></div>
<div class="t" style="left:1079.60px;top:549.72px;font-size:10.41px;font-family:'Liberation Mono',monospace;color:#e3e3e3;z-index:10;-webkit-text-stroke:0.25px currentColor;max-width:707.9px;overflow:hidden"><span style="color:#74a3e8">subActionCount</span><span style="color:#e3e3e3">: </span><span style="color:#a08af4">0</span></div>
<div class="t" style="left:1079.60px;top:564.80px;font-size:10.41px;font-family:'Liberation Mono',monospace;color:#e3e3e3;z-index:10;-webkit-text-stroke:0.25px currentColor;max-width:707.9px;overflow:hidden"><span style="color:#74a3e8">type</span><span style="color:#e3e3e3">: </span><span style="color:#4ec3ee">"DEPLOY_WINGET_APP"</span></div>
<div class="t" style="left:1079.60px;top:579.88px;font-size:10.41px;font-family:'Liberation Mono',monospace;color:#e3e3e3;z-index:10;-webkit-text-stroke:0.25px currentColor;max-width:707.9px;overflow:hidden"><span style="color:#74a3e8">uuid</span><span style="color:#e3e3e3">: </span><span style="color:#4ec3ee">"019B20AB-AA3B-791E-9555-88FA6CDD3118"</span></div>
<div class="r" style="left:1023px;top:177.2px;width:764.6px;height:468px;overflow:hidden;z-index:10">
</div>
<div class="t" style="left:1067.80px;top:594.96px;height:50.34px;overflow:hidden;font-size:10.41px;font-family:'Liberation Mono',monospace;color:#e3e3e3;z-index:10;-webkit-text-stroke:0.25px currentColor"><span style="color:#74a3e8">5</span>: {uuid: "019B1FC6-3C26-7074-B275-2FAE6DF77EC3", comment: "", state: "EXECUTED", type: "CHANGE_POLICY",…}</div>
<svg class="r" style="left:1057.60px;top:594.56px;z-index:10" width="5" height="8" viewBox="0 0 5 8"><path d="M0,0 L4.6,3.75 L0,7.5 Z" fill="#bdbdbd"/></svg>
<div class="t" style="left:1067.80px;top:610.04px;height:35.26px;overflow:hidden;font-size:10.41px;font-family:'Liberation Mono',monospace;color:#e3e3e3;z-index:10;-webkit-text-stroke:0.25px currentColor"><span style="color:#74a3e8">6</span>: {uuid: "019B1FC4-CF59-7A8B-AFEA-C0E3F3DD4DDE", comment: "", state: "ERROR", type: "DEPLOY_WINGET_APP",…}</div>
<svg class="r" style="left:1057.60px;top:609.64px;z-index:10" width="5" height="8" viewBox="0 0 5 8"><path d="M0,0 L4.6,3.75 L0,7.5 Z" fill="#bdbdbd"/></svg>
<div class="t" style="left:1067.80px;top:625.12px;height:20.18px;overflow:hidden;font-size:10.41px;font-family:'Liberation Mono',monospace;color:#e3e3e3;z-index:10;-webkit-text-stroke:0.25px currentColor"><span style="color:#74a3e8">7</span>: {uuid: "019B1FC2-F15B-73A3-9303-6F78C7EC2DB5", comment: "Query device information", state: "EXECUTED",…}</div>
<svg class="r" style="left:1057.60px;top:624.72px;z-index:10" width="5" height="8" viewBox="0 0 5 8"><path d="M0,0 L4.6,3.75 L0,7.5 Z" fill="#bdbdbd"/></svg>
<div class="t" style="left:1067.80px;top:640.20px;height:5.10px;overflow:hidden;font-size:10.41px;font-family:'Liberation Mono',monospace;color:#e3e3e3;z-index:10;-webkit-text-stroke:0.25px currentColor"><span style="color:#74a3e8">8</span>: {uuid: "019B11E5-77D3-7A3E-8A2B-D1ED828C06EB", comment: "", state: "EXECUTED",…}</div>
<svg class="r" style="left:1057.60px;top:639.80px;z-index:10" width="5" height="5.499999999999886" viewBox="0 0 5 5.499999999999886"><path d="M0,0 L4.6,3.75 L0,7.5 Z" fill="#bdbdbd"/></svg>
<div class="r" style="left:1067.80px;top:453.20px;width:720.00px;height:21.60px;box-sizing:border-box;border:2.4px solid #e8491d;border-radius:6px;z-index:11;z-index:10"></div>
<div class="r" style="left:917.00px;top:658.70px;width:883.00px;height:1.60px;background:#4a4a50;z-index:10"></div>
<div class="r" style="left:917.00px;top:660.30px;width:883.00px;height:25.70px;background:#3a393e;z-index:10"></div>
<div class="r" style="left:917.00px;top:684.60px;width:883.00px;height:1.20px;background:#4a4a50;z-index:10"></div>
<svg class="r" style="left:929.50px;top:667.50px;z-index:10" width="5" height="12" viewBox="0 0 5 12"><circle cx="2.5" cy="1.6" r="1.4" fill="#c7c7c7"/><circle cx="2.5" cy="6" r="1.4" fill="#c7c7c7"/><circle cx="2.5" cy="10.4" r="1.4" fill="#c7c7c7"/></svg>
<div class="t" style="left:952.20px;top:668.70px;font-size:12.17px;color:#d8d8d8;font-weight:400;font-family:'Liberation Sans', sans-serif;z-index:10;">Console</div>
<div class="t" style="left:1015.60px;top:668.70px;font-size:12.23px;color:#d8d8d8;font-weight:400;font-family:'Liberation Sans', sans-serif;z-index:10;">What's new</div>
<div class="t" style="left:1107.50px;top:668.70px;font-size:12.6px;color:#a8b0ff;font-weight:400;font-family:'Liberation Sans', sans-serif;z-index:10;">Network conditions</div>
<svg class="r" style="left:1218.20px;top:670.60px;z-index:10" width="7.5" height="7.5" viewBox="0 0 7.5 7.5"><path d="M0.6,0.6 L6.9,6.9 M6.9,0.6 L0.6,6.9" stroke="#a8b0ff" stroke-width="1.3"/></svg>
<div class="r" style="left:1099.30px;top:683.60px;width:134.00px;height:2.60px;background:#a8b0ff;border-radius:2px 2px 0 0;z-index:10"></div>
<svg class="r" style="left:1751.50px;top:666.30px;z-index:10" width="14" height="13.5" viewBox="0 0 14 13.5"><rect x="0.7" y="0.7" width="12.6" height="12.1" rx="1.5" fill="none" stroke="#c7c7c7" stroke-width="1.4"/><path d="M8.8,0.7 L8.8,12.8" stroke="#c7c7c7" stroke-width="1.4"/></svg>
<svg class="r" style="left:1779.00px;top:668.50px;z-index:10" width="10" height="10" viewBox="0 0 10 10"><path d="M0.7,0.7 L9.3,9.3 M9.3,0.7 L0.7,9.3" stroke="#c7c7c7" stroke-width="1.4"/></svg>
<div class="r" style="left:1787.60px;top:686.00px;width:12.40px;height:187.00px;background:#2a2a2d;z-index:10"></div>
<div class="r" style="left:1791.60px;top:688.70px;width:7.40px;height:127.30px;background:#6c6c6f;border-radius:4px;z-index:10"></div>
<div class="t" style="left:927.50px;top:705.20px;font-size:12px;color:#dcdcdc;font-weight:400;font-family:'Liberation Sans', sans-serif;z-index:10;">Caching</div>
<div class="r" style="left:1071.30px;top:705.00px;width:11.50px;height:11.50px;background:#3a3a3e;border-radius:2.5px;z-index:10"></div>
<div class="r" style="left:1071.30px;top:705.00px;width:11.50px;height:11.50px;box-sizing:border-box;border:1.3px solid #8a8a8f;border-radius:2.5px;z-index:10"></div>
<div class="t" style="left:1087.60px;top:705.20px;font-size:12.11px;color:#dcdcdc;font-weight:400;font-family:'Liberation Sans', sans-serif;z-index:10;">Disable cache</div>
<div class="r" style="left:928.00px;top:734.50px;width:848.50px;height:1.10px;background:#45454a;z-index:10"></div>
<div class="t" style="left:927.50px;top:751.00px;font-size:12px;color:#dcdcdc;font-weight:400;font-family:'Liberation Sans', sans-serif;z-index:10;">Network</div>
<div class="r" style="left:1065.50px;top:745.50px;width:235.80px;height:22.00px;box-sizing:border-box;border:1px solid #8a8a90;border-radius:4px;z-index:10"></div>
<div class="t" style="left:1073.80px;top:751.00px;font-size:12px;color:#e0e0e0;font-weight:400;font-family:'Liberation Sans', sans-serif;z-index:10;">No throttling</div>
<svg class="r" style="left:1287.50px;top:754.50px;z-index:10" width="8" height="5" viewBox="0 0 8 5"><path d="M0,0 L7.5,0 L3.75,4 Z" fill="#c7c7c7"/></svg>
<div class="r" style="left:1309.30px;top:745.50px;width:235.70px;height:22.00px;box-sizing:border-box;border:1px solid #8a8a90;border-radius:4px;z-index:10"></div>
<div class="t" style="left:1317.00px;top:751.00px;font-size:12px;color:#e0e0e0;font-weight:400;font-family:'Liberation Sans', sans-serif;z-index:10;">'Save-Data': default</div>
<svg class="r" style="left:1531.50px;top:754.50px;z-index:10" width="8" height="5" viewBox="0 0 8 5"><path d="M0,0 L7.5,0 L3.75,4 Z" fill="#c7c7c7"/></svg>
<div class="r" style="left:928.00px;top:777.60px;width:848.50px;height:1.10px;background:#45454a;z-index:10"></div>
<div class="t" style="left:927.50px;top:791.30px;font-size:12px;color:#dcdcdc;font-weight:400;font-family:'Liberation Sans', sans-serif;z-index:10;">User agent</div>
<svg class="r" style="left:1071.30px;top:793.50px;z-index:10" width="11.5" height="11.5" viewBox="0 0 11.5 11.5"><rect x="0" y="0" width="11.5" height="11.5" rx="2" fill="#a8b0ff"/><path d="M2.6,5.8 L4.8,8.2 L8.8,3.2" fill="none" stroke="#1e1e22" stroke-width="1.6"/></svg>
<div class="t" style="left:1087.80px;top:793.80px;font-size:12px;color:#e8e8e8;font-weight:400;font-family:'Liberation Sans', sans-serif;z-index:10;">Use browser default</div>
<div class="r" style="left:1065.50px;top:818.20px;width:235.80px;height:21.80px;background:#38383c;border-radius:4px;z-index:10"></div>
<div class="t" style="left:1073.80px;top:823.50px;font-size:12px;color:#8e8e92;font-weight:400;font-family:'Liberation Sans', sans-serif;z-index:10;">Chrome — Android Tablet</div>
<svg class="r" style="left:1287.50px;top:827.00px;z-index:10" width="8" height="5" viewBox="0 0 8 5"><path d="M0,0 L7.5,0 L3.75,4 Z" fill="#8e8e92"/></svg>
<div class="r" style="left:1065.50px;top:848.70px;width:692.00px;height:21.80px;box-sizing:border-box;border:1px solid #3e3e43;border-radius:4px;z-index:10"></div>
<div class="t" style="left:1071.80px;top:855.20px;font-size:11.86px;color:#8e8e92;font-weight:400;font-family:'Liberation Sans', sans-serif;z-index:10;">Mozilla/5.0 (Linux; Android 4.3; Nexus 7 Build/JSS15Q) AppleWebKit/537.36 (KHTML, like Gecko) Chrome/142.0.0.0 Safari/537.3</div>
<svg class="r" style="left:1192.90px;top:21.70px;z-index:50" width="64" height="64" viewBox="0 0 64 64"><g transform="translate(32,32) rotate(-114.6)"><circle r="17" fill="#ef4823"/><path d="M10.47,13.40 Q17.34,5.10 25.73,0 Q17.34,-5.10 10.47,-13.40 Z" fill="#ef4823"/></g></svg>
<div class="t" style="left:1209.90px;top:45.30px;width:30px;text-align:center;font-size:18px;color:#fff;z-index:51;font-family:'Liberation Sans',sans-serif">1</div>
<svg class="r" style="left:946.50px;top:36.20px;z-index:50" width="64" height="64" viewBox="0 0 64 64"><g transform="translate(32,32) rotate(-128.2)"><circle r="17" fill="#ef4823"/><path d="M10.47,13.40 Q17.34,5.10 24.93,0 Q17.34,-5.10 10.47,-13.40 Z" fill="#ef4823"/></g></svg>
<div class="t" style="left:963.50px;top:59.80px;width:30px;text-align:center;font-size:18px;color:#fff;z-index:51;font-family:'Liberation Sans',sans-serif">2</div>
<svg class="r" style="left:996.50px;top:180.20px;z-index:50" width="64" height="64" viewBox="0 0 64 64"><g transform="translate(32,32) rotate(47.9)"><circle r="17" fill="#ef4823"/><path d="M10.47,13.40 Q17.34,5.10 25.35,0 Q17.34,-5.10 10.47,-13.40 Z" fill="#ef4823"/></g></svg>
<div class="t" style="left:1013.50px;top:203.80px;width:30px;text-align:center;font-size:18px;color:#fff;z-index:51;font-family:'Liberation Sans',sans-serif">5</div>
<svg class="r" style="left:996.30px;top:284.20px;z-index:50" width="64" height="64" viewBox="0 0 64 64"><g transform="translate(32,32) rotate(-7.1)"><circle r="17" fill="#ef4823"/><path d="M10.47,13.40 Q17.34,5.10 25.80,0 Q17.34,-5.10 10.47,-13.40 Z" fill="#ef4823"/></g></svg>
<div class="t" style="left:1013.30px;top:307.80px;width:30px;text-align:center;font-size:18px;color:#fff;z-index:51;font-family:'Liberation Sans',sans-serif">6</div>
</body></html>
